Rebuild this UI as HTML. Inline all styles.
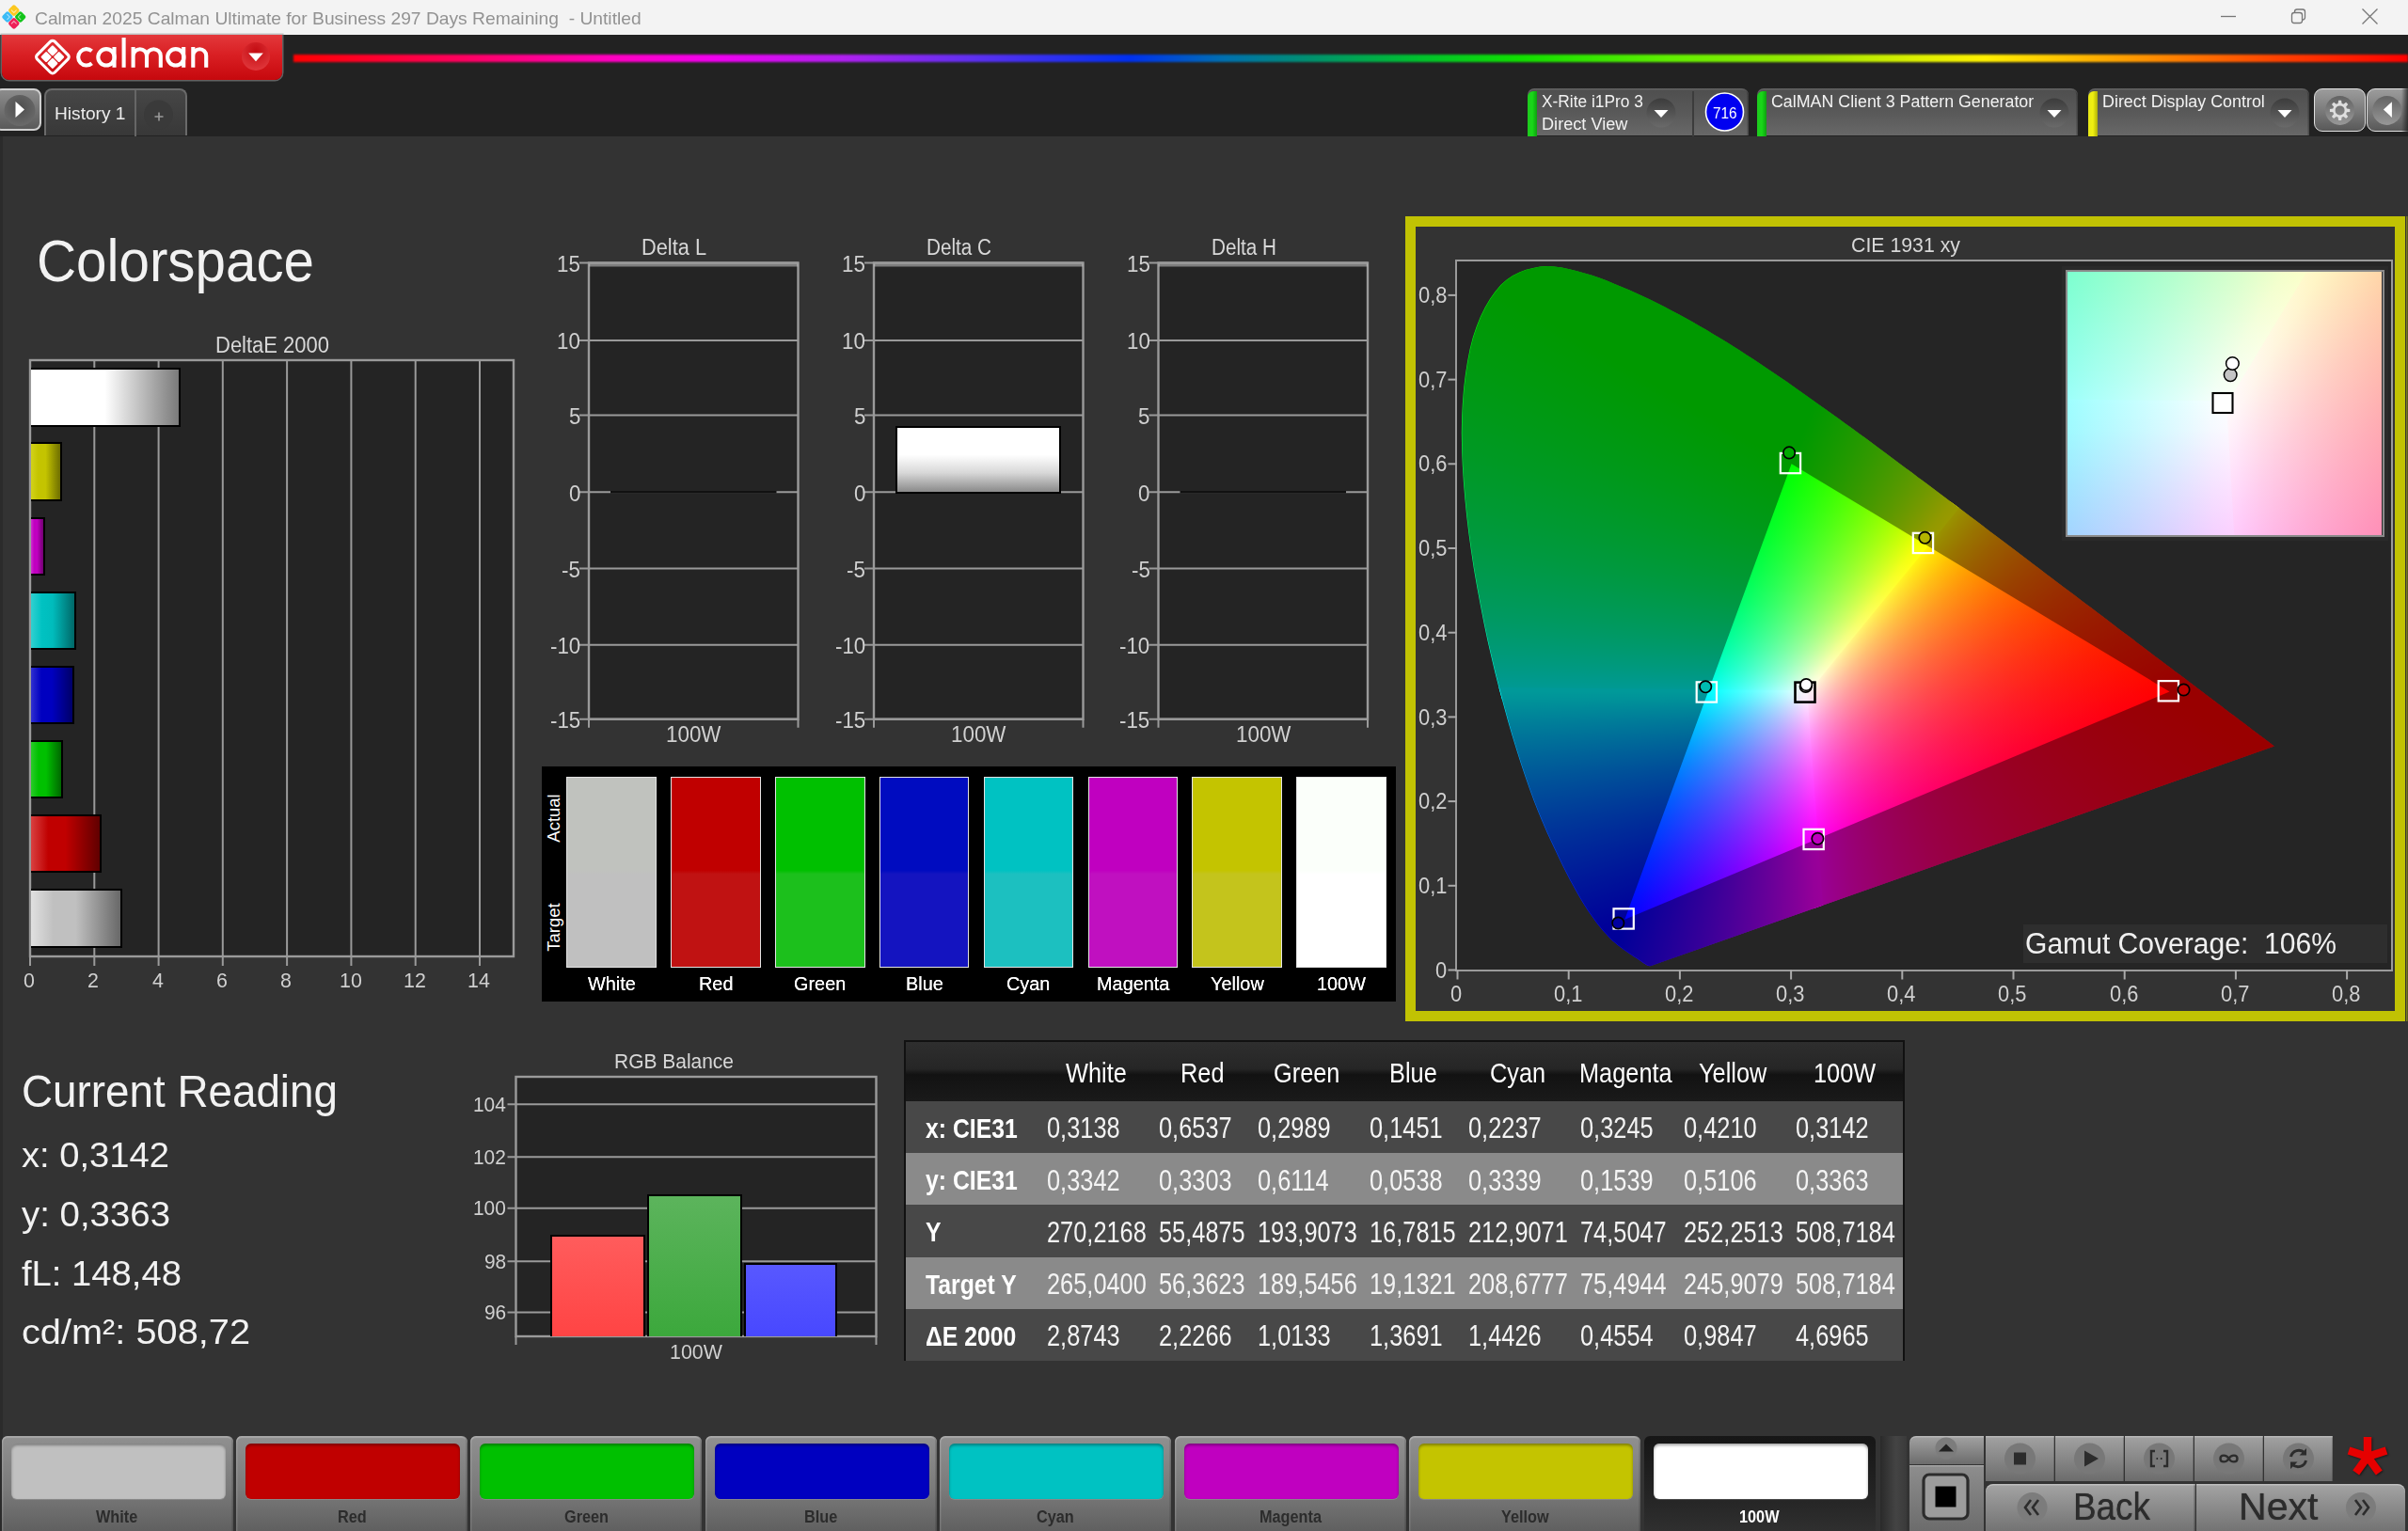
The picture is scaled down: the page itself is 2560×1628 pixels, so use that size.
<!DOCTYPE html>
<html><head><meta charset="utf-8"><title>Calman</title>
<style>
html,body{margin:0;padding:0;}
html{width:2560px;height:1628px;overflow:hidden;}
body{width:2560px;height:1628px;background:#333;overflow:hidden;position:relative;font-family:"Liberation Sans",sans-serif;}
#app{position:absolute;left:0;top:0;width:2560px;height:1628px;overflow:hidden;}
.t{position:absolute;white-space:nowrap;transform-origin:0 50%;}
.b{position:absolute;box-sizing:border-box;}
svg{position:absolute;overflow:visible;}
</style></head><body><div id="app">
<div class="b" style="left:0.0px;top:0.0px;width:2560.0px;height:37.0px;background:#f3f3f3"></div>
<div class="t" style="left:36.6px;top:10.7px;font-size:18.4px;line-height:18.4px;color:#929292;transform:scaleX(1.0459);white-space:pre;">Calman 2025 Calman Ultimate for Business 297 Days Remaining  - Untitled</div>
<svg style="left:0px;top:3px" width="30" height="30" viewBox="0 0 30 30">
<g transform="translate(14.8 15) rotate(45)">
<rect x="-9.5" y="-9.5" width="9.3" height="9.3" rx="2.2" fill="#fcc820"/>
<rect x="0.2" y="-9.5" width="9.3" height="9.3" rx="2.2" fill="#12c41a"/>
<rect x="-9.5" y="0.2" width="9.3" height="9.3" rx="2.2" fill="#3cbcf6"/>
<rect x="0.2" y="0.2" width="9.3" height="9.3" rx="2.2" fill="#ee2058"/>
<g fill="none" stroke="#fff" stroke-opacity=".6" stroke-width="1">
<path d="M-3.2 -7.200 v4 h-4"/><path d="M3.200 -7.200 v4 h4" transform="translate(0 0)"/><path d="M-7.200 3.200 h4 v4"/><path d="M3.200 7.200 v-4 h4"/></g>
</g></svg>
<svg style="left:2340px;top:0" width="220" height="37" viewBox="0 0 220 37" fill="none" stroke="#777" stroke-width="1.3">
<path d="M21 17.5 H37"/>
<rect x="96.5" y="13.5" width="11" height="11" rx="2.5"/><path d="M99.5 13 V12.5 a2.5 2.5 0 0 1 2.5 -2.5 h6 a2.5 2.5 0 0 1 2.5 2.5 v6 a2.5 2.5 0 0 1 -2.5 2.5 h-.5"/>
<path d="M171.5 9.5 L187.5 25.5 M187.5 9.5 L171.5 25.5"/>
</svg>
<div class="b" style="left:0.0px;top:37.0px;width:2560.0px;height:107.5px;background:#222"></div>
<div class="b" style="left:312.0px;top:57.5px;width:2248.0px;height:8.5px;background:linear-gradient(90deg,#ff0000 0%,#ff0060 8%,#ff00c0 15%,#f000f0 20%,#b020f0 26%,#6030f0 32%,#0030f0 39.5%,#0070b0 44%,#009070 48%,#00c030 53%,#10e000 58%,#60f000 65%,#a0e800 72%,#e0f000 77%,#fff000 80%,#ffc000 84%,#ff8000 89%,#ff4000 94%,#ff0000 100%);filter:blur(.8px);"></div>
<div class="b" style="left:2.0px;top:37.0px;width:298.0px;height:47.7px;background:linear-gradient(#e3383b,#d91f23 45%,#c6080d);border-radius:0 0 8px 8px;box-shadow:0 0 0 1.5px rgba(150,150,150,.55);"></div>
<div class="b" style="left:1493.5px;top:230.0px;width:1063.5px;height:856.0px;border:11px solid #c1c203;background:#333"></div>
<div class="b" style="left:1547.3px;top:275.8px;width:996.9px;height:756.9px;background:#252525;border:2.4px solid #9a9a9a"></div>
<div class="b" style="left:1548.5px;top:276.0px;width:994px;height:755px;clip-path:polygon(206.8px 751.0px,206.8px 751.0px,206.7px 751.0px,206.6px 751.1px,206.6px 751.1px,206.5px 751.1px,206.4px 751.1px,206.3px 751.1px,206.3px 751.1px,206.2px 751.2px,206.1px 751.2px,206.0px 751.2px,205.8px 751.2px,205.7px 751.2px,205.6px 751.2px,205.5px 751.2px,205.3px 751.2px,205.2px 751.2px,205.0px 751.2px,204.8px 751.2px,204.6px 751.1px,204.3px 751.1px,204.1px 751.1px,203.8px 751.0px,203.6px 750.9px,203.4px 750.8px,203.2px 750.8px,203.0px 750.7px,202.7px 750.5px,202.5px 750.4px,202.3px 750.3px,202.0px 750.2px,201.8px 750.0px,201.5px 749.9px,201.3px 749.7px,201.0px 749.5px,200.6px 749.3px,200.3px 749.1px,199.9px 748.9px,199.5px 748.6px,199.1px 748.4px,198.7px 748.1px,198.3px 747.8px,197.8px 747.5px,197.4px 747.2px,196.9px 746.8px,196.4px 746.5px,195.9px 746.1px,195.3px 745.7px,194.7px 745.3px,194.1px 744.9px,193.5px 744.5px,192.9px 744.1px,192.2px 743.6px,191.4px 743.1px,190.6px 742.6px,189.8px 742.1px,188.9px 741.5px,188.0px 740.9px,187.1px 740.3px,186.1px 739.6px,185.1px 739.0px,184.1px 738.3px,183.0px 737.6px,181.9px 736.8px,180.7px 736.0px,179.5px 735.1px,178.2px 734.2px,176.9px 733.3px,175.6px 732.3px,174.2px 731.2px,172.7px 730.1px,171.2px 728.9px,169.7px 727.6px,168.1px 726.3px,166.5px 724.9px,164.8px 723.4px,163.1px 721.7px,161.2px 719.7px,159.2px 717.5px,157.1px 715.2px,154.9px 712.7px,152.6px 710.0px,150.2px 707.0px,147.7px 703.7px,145.1px 700.1px,142.4px 696.3px,139.6px 692.2px,136.7px 687.8px,133.7px 683.0px,130.5px 677.6px,127.3px 671.9px,123.9px 665.8px,120.3px 659.2px,116.7px 652.2px,112.9px 644.7px,108.9px 636.5px,104.8px 627.7px,100.4px 618.5px,95.9px 608.7px,91.4px 598.3px,86.8px 587.2px,82.2px 575.5px,77.6px 563.0px,73.0px 549.8px,68.4px 536.0px,63.8px 521.5px,59.2px 506.5px,54.7px 490.9px,50.2px 474.6px,45.6px 457.5px,41.1px 439.9px,36.8px 421.8px,32.6px 403.6px,28.8px 385.3px,25.2px 366.8px,21.7px 347.9px,18.4px 328.9px,15.5px 309.8px,12.9px 290.9px,10.7px 272.6px,8.9px 254.5px,7.4px 236.4px,6.3px 218.7px,5.6px 201.2px,5.3px 184.4px,5.6px 168.1px,6.4px 152.4px,7.6px 137.1px,9.4px 122.3px,11.6px 108.2px,14.2px 94.9px,17.4px 82.6px,21.2px 71.2px,25.5px 60.5px,30.3px 50.7px,35.6px 41.8px,41.1px 33.9px,47.0px 27.1px,53.2px 21.5px,59.8px 17.0px,66.8px 13.5px,74.0px 10.8px,81.4px 8.9px,88.8px 7.6px,96.4px 7.1px,104.1px 7.5px,112.0px 8.6px,120.0px 10.3px,128.0px 12.3px,136.0px 14.4px,144.0px 16.7px,152.0px 19.5px,160.0px 22.6px,168.1px 25.9px,176.0px 29.2px,183.9px 32.6px,191.6px 36.0px,199.2px 39.5px,206.7px 43.1px,214.2px 46.8px,221.6px 50.6px,229.0px 54.4px,236.3px 58.3px,243.6px 62.3px,250.8px 66.3px,258.0px 70.5px,265.2px 74.6px,272.4px 78.9px,279.6px 83.2px,286.7px 87.6px,293.8px 92.1px,301.0px 96.6px,308.1px 101.2px,315.2px 105.8px,322.3px 110.5px,329.3px 115.2px,336.4px 120.0px,343.4px 124.8px,350.5px 129.6px,357.5px 134.5px,364.5px 139.4px,371.6px 144.4px,378.6px 149.4px,385.6px 154.4px,392.7px 159.4px,399.7px 164.5px,406.7px 169.6px,413.8px 174.7px,420.9px 179.8px,427.9px 185.0px,435.0px 190.1px,442.0px 195.3px,449.0px 200.5px,456.1px 205.7px,463.1px 210.9px,470.1px 216.2px,477.1px 221.4px,484.1px 226.6px,491.1px 231.9px,498.1px 237.1px,505.1px 242.3px,512.0px 247.5px,519.0px 252.7px,525.9px 257.9px,532.8px 263.1px,539.7px 268.3px,546.6px 273.5px,553.4px 278.6px,560.2px 283.8px,566.9px 288.9px,573.7px 294.0px,580.4px 299.0px,587.0px 304.1px,593.7px 309.1px,600.2px 314.1px,606.8px 319.0px,613.3px 323.9px,619.7px 328.8px,626.1px 333.7px,632.5px 338.5px,638.7px 343.2px,645.0px 347.9px,651.1px 352.5px,657.2px 357.1px,663.3px 361.7px,669.2px 366.2px,675.1px 370.6px,680.9px 375.0px,686.6px 379.3px,692.2px 383.6px,697.7px 387.8px,703.1px 391.9px,708.5px 395.9px,713.6px 399.8px,718.7px 403.6px,723.6px 407.4px,728.4px 411.0px,733.0px 414.5px,737.6px 418.0px,742.1px 421.4px,746.5px 424.7px,750.9px 428.0px,755.1px 431.2px,759.3px 434.3px,763.3px 437.4px,767.2px 440.3px,770.9px 443.1px,774.6px 445.8px,778.1px 448.5px,781.5px 451.0px,784.8px 453.5px,788.0px 455.9px,791.1px 458.2px,794.0px 460.5px,796.9px 462.7px,799.6px 464.7px,802.3px 466.8px,804.9px 468.7px,807.4px 470.6px,809.7px 472.4px,812.0px 474.1px,814.2px 475.8px,816.3px 477.4px,818.4px 479.0px,820.3px 480.4px,822.2px 481.9px,824.0px 483.2px,825.8px 484.5px,827.5px 485.8px,829.1px 487.0px,830.7px 488.2px,832.2px 489.4px,833.6px 490.5px,835.0px 491.5px,836.4px 492.6px,837.7px 493.6px,839.0px 494.6px,840.3px 495.5px,841.5px 496.4px,842.7px 497.3px,843.8px 498.2px,844.9px 499.0px,846.0px 499.9px,847.1px 500.7px,848.1px 501.4px,849.0px 502.1px,850.0px 502.9px,850.9px 503.5px,851.7px 504.2px,852.6px 504.8px,853.4px 505.4px,854.1px 506.0px,854.9px 506.5px,855.6px 507.0px,856.3px 507.5px,856.9px 508.0px,857.5px 508.5px,858.1px 508.9px,858.6px 509.3px,859.1px 509.7px,859.6px 510.1px,860.1px 510.5px,860.6px 510.8px,861.0px 511.2px,861.4px 511.5px,861.9px 511.8px,862.2px 512.1px,862.6px 512.3px,862.9px 512.6px,863.2px 512.8px,863.5px 513.0px,863.9px 513.3px,864.2px 513.6px,864.6px 513.9px,865.0px 514.2px,865.4px 514.4px,865.8px 514.8px,866.2px 515.1px,866.7px 515.5px,867.3px 516.0px,868.0px 516.4px,868.6px 516.9px,869.1px 517.3px,869.4px 517.5px)">
<div style="position:absolute;left:0;top:0;width:994px;height:755px;clip-path:polygon(367.8px 459.5px,2823.1px -2698.2px,3655.5px -1818.9px,4186.6px -730.7px,4367.7px 466.5px,4182.4px 1663.0px,3647.5px 2749.3px,2812.1px 3625.8px,1752.7px 4212.1px,566.4px 4454.6px);background:conic-gradient(from 0deg at 178.3px 701.7px,#00ff00 0deg,#00ff00 38deg,#00f600 39deg,#00e200 40deg,#00d100 41deg,#00c000 42deg,#00b200 43deg,#00a400 44deg,#009700 45deg,#008c00 46deg,#008100 47deg,#007700 48deg,#006d00 49deg,#006400 50deg,#005c00 51deg,#005400 52deg,#004c00 53deg,#004500 54deg,#003f00 55deg,#003800 56deg,#003200 57deg,#002c00 58deg,#002700 59deg,#002100 60deg,#001c00 61deg,#001700 62deg,#001300 63deg,#000e00 64deg,#000a00 65deg,#000500 66deg,#000100 67deg,#000000 68deg,#000000 247deg,#00ff00 248deg,#00ff00 360deg),conic-gradient(from 0deg at 355.6px 217.3px,#000000 0deg,#000000 121deg,#000002 122deg,#000004 123deg,#000007 124deg,#000009 125deg,#00000b 126deg,#00000d 127deg,#000010 128deg,#000012 129deg,#000015 130deg,#000017 131deg,#000019 132deg,#00001c 133deg,#00001e 134deg,#000021 135deg,#000024 136deg,#000026 137deg,#000029 138deg,#00002c 139deg,#00002f 140deg,#000031 141deg,#000034 142deg,#000037 143deg,#00003a 144deg,#00003d 145deg,#000041 146deg,#000044 147deg,#000047 148deg,#00004b 149deg,#00004e 150deg,#000052 151deg,#000056 152deg,#00005a 153deg,#00005e 154deg,#000062 155deg,#000066 156deg,#00006b 157deg,#00006f 158deg,#000074 159deg,#000079 160deg,#00007e 161deg,#000084 162deg,#00008a 163deg,#000090 164deg,#000096 165deg,#00009d 166deg,#0000a3 167deg,#0000ab 168deg,#0000b3 169deg,#0000bb 170deg,#0000c4 171deg,#0000cd 172deg,#0000d7 173deg,#0000e1 174deg,#0000ed 175deg,#0000f9 176deg,#0000ff 177deg,#0000ff 301deg,#000000 302deg,#000000 360deg),#f00;background-blend-mode:lighten,lighten,normal"></div>
<div style="position:absolute;left:0;top:0;width:994px;height:755px;clip-path:polygon(371.9px 463.1px,2902.3px -2634.8px,1933.9px -3219.3px,840.5px -3509.4px,-290.4px -3481.7px,-1368.3px -3138.5px,-2307.0px -2507.3px,-3031.5px -1638.5px,-3483.8px -601.7px,-3627.7px 520.4px);background:conic-gradient(from 0deg at 178.3px 701.7px,#000000 0deg,#000000 20deg,#080000 21deg,#120000 22deg,#1c0000 23deg,#260000 24deg,#310000 25deg,#3c0000 26deg,#480000 27deg,#540000 28deg,#610000 29deg,#6e0000 30deg,#7c0000 31deg,#8a0000 32deg,#990000 33deg,#a90000 34deg,#ba0000 35deg,#cc0000 36deg,#df0000 37deg,#f30000 38deg,#ff0000 39deg,#ff0000 200deg,#000000 201deg,#000000 360deg),conic-gradient(from 0deg at 757.5px 459.5px,#000000 0deg,#000000 121deg,#0000ff 122deg,#0000ff 269deg,#0000fc 270deg,#0000eb 271deg,#0000db 272deg,#0000cc 273deg,#0000bf 274deg,#0000b2 275deg,#0000a6 276deg,#00009b 277deg,#000091 278deg,#000087 279deg,#00007e 280deg,#000075 281deg,#00006c 282deg,#000064 283deg,#00005d 284deg,#000055 285deg,#00004f 286deg,#000048 287deg,#000042 288deg,#00003b 289deg,#000036 290deg,#000030 291deg,#00002a 292deg,#000025 293deg,#000020 294deg,#00001b 295deg,#000016 296deg,#000012 297deg,#00000d 298deg,#000009 299deg,#000005 300deg,#000000 301deg,#000000 360deg),#0f0;background-blend-mode:lighten,lighten,normal"></div>
<div style="position:absolute;left:0;top:0;width:994px;height:755px;clip-path:polygon(372.7px 458.2px,667.1px 4447.3px,-158.1px 4422.8px,-960.8px 4229.4px,-1706.6px 3875.3px,-2363.8px 3375.7px,-2904.5px 2751.7px,-3305.5px 2030.1px,-3549.9px 1241.5px,-3627.1px 419.5px);background:conic-gradient(from 0deg at 355.6px 217.3px,#000000 0deg,#000000 20deg,#ff0000 21deg,#ff0000 176deg,#f80000 177deg,#eb0000 178deg,#de0000 179deg,#d20000 180deg,#c60000 181deg,#ba0000 182deg,#ae0000 183deg,#a30000 184deg,#980000 185deg,#8d0000 186deg,#820000 187deg,#770000 188deg,#6d0000 189deg,#620000 190deg,#580000 191deg,#4e0000 192deg,#440000 193deg,#3a0000 194deg,#300000 195deg,#270000 196deg,#1d0000 197deg,#140000 198deg,#0a0000 199deg,#010000 200deg,#000000 201deg,#000000 360deg),conic-gradient(from 0deg at 757.5px 459.5px,#00ff00 0deg,#00ff00 67deg,#000000 68deg,#000000 247deg,#000600 248deg,#000e00 249deg,#001600 250deg,#001e00 251deg,#002600 252deg,#002f00 253deg,#003800 254deg,#004100 255deg,#004a00 256deg,#005400 257deg,#005e00 258deg,#006900 259deg,#007400 260deg,#007f00 261deg,#008b00 262deg,#009800 263deg,#00a500 264deg,#00b300 265deg,#00c100 266deg,#00d000 267deg,#00e000 268deg,#00f100 269deg,#00ff00 270deg,#00ff00 360deg),#00f;background-blend-mode:lighten,lighten,normal"></div>
<svg style="left:0;top:0" width="994" height="755"><path d="M206.8 751.0 L206.8 751.0 L206.7 751.0 L206.6 751.1 L206.6 751.1 L206.5 751.1 L206.4 751.1 L206.3 751.1 L206.3 751.1 L206.2 751.2 L206.1 751.2 L206.0 751.2 L205.8 751.2 L205.7 751.2 L205.6 751.2 L205.5 751.2 L205.3 751.2 L205.2 751.2 L205.0 751.2 L204.8 751.2 L204.6 751.1 L204.3 751.1 L204.1 751.1 L203.8 751.0 L203.6 750.9 L203.4 750.8 L203.2 750.8 L203.0 750.7 L202.7 750.5 L202.5 750.4 L202.3 750.3 L202.0 750.2 L201.8 750.0 L201.5 749.9 L201.3 749.7 L201.0 749.5 L200.6 749.3 L200.3 749.1 L199.9 748.9 L199.5 748.6 L199.1 748.4 L198.7 748.1 L198.3 747.8 L197.8 747.5 L197.4 747.2 L196.9 746.8 L196.4 746.5 L195.9 746.1 L195.3 745.7 L194.7 745.3 L194.1 744.9 L193.5 744.5 L192.9 744.1 L192.2 743.6 L191.4 743.1 L190.6 742.6 L189.8 742.1 L188.9 741.5 L188.0 740.9 L187.1 740.3 L186.1 739.6 L185.1 739.0 L184.1 738.3 L183.0 737.6 L181.9 736.8 L180.7 736.0 L179.5 735.1 L178.2 734.2 L176.9 733.3 L175.6 732.3 L174.2 731.2 L172.7 730.1 L171.2 728.9 L169.7 727.6 L168.1 726.3 L166.5 724.9 L164.8 723.4 L163.1 721.7 L161.2 719.7 L159.2 717.5 L157.1 715.2 L154.9 712.7 L152.6 710.0 L150.2 707.0 L147.7 703.7 L145.1 700.1 L142.4 696.3 L139.6 692.2 L136.7 687.8 L133.7 683.0 L130.5 677.6 L127.3 671.9 L123.9 665.8 L120.3 659.2 L116.7 652.2 L112.9 644.7 L108.9 636.5 L104.8 627.7 L100.4 618.5 L95.9 608.7 L91.4 598.3 L86.8 587.2 L82.2 575.5 L77.6 563.0 L73.0 549.8 L68.4 536.0 L63.8 521.5 L59.2 506.5 L54.7 490.9 L50.2 474.6 L45.6 457.5 L41.1 439.9 L36.8 421.8 L32.6 403.6 L28.8 385.3 L25.2 366.8 L21.7 347.9 L18.4 328.9 L15.5 309.8 L12.9 290.9 L10.7 272.6 L8.9 254.5 L7.4 236.4 L6.3 218.7 L5.6 201.2 L5.3 184.4 L5.6 168.1 L6.4 152.4 L7.6 137.1 L9.4 122.3 L11.6 108.2 L14.2 94.9 L17.4 82.6 L21.2 71.2 L25.5 60.5 L30.3 50.7 L35.6 41.8 L41.1 33.9 L47.0 27.1 L53.2 21.5 L59.8 17.0 L66.8 13.5 L74.0 10.8 L81.4 8.9 L88.8 7.6 L96.4 7.1 L104.1 7.5 L112.0 8.6 L120.0 10.3 L128.0 12.3 L136.0 14.4 L144.0 16.7 L152.0 19.5 L160.0 22.6 L168.1 25.9 L176.0 29.2 L183.9 32.6 L191.6 36.0 L199.2 39.5 L206.7 43.1 L214.2 46.8 L221.6 50.6 L229.0 54.4 L236.3 58.3 L243.6 62.3 L250.8 66.3 L258.0 70.5 L265.2 74.6 L272.4 78.9 L279.6 83.2 L286.7 87.6 L293.8 92.1 L301.0 96.6 L308.1 101.2 L315.2 105.8 L322.3 110.5 L329.3 115.2 L336.4 120.0 L343.4 124.8 L350.5 129.6 L357.5 134.5 L364.5 139.4 L371.6 144.4 L378.6 149.4 L385.6 154.4 L392.7 159.4 L399.7 164.5 L406.7 169.6 L413.8 174.7 L420.9 179.8 L427.9 185.0 L435.0 190.1 L442.0 195.3 L449.0 200.5 L456.1 205.7 L463.1 210.9 L470.1 216.2 L477.1 221.4 L484.1 226.6 L491.1 231.9 L498.1 237.1 L505.1 242.3 L512.0 247.5 L519.0 252.7 L525.9 257.9 L532.8 263.1 L539.7 268.3 L546.6 273.5 L553.4 278.6 L560.2 283.8 L566.9 288.9 L573.7 294.0 L580.4 299.0 L587.0 304.1 L593.7 309.1 L600.2 314.1 L606.8 319.0 L613.3 323.9 L619.7 328.8 L626.1 333.7 L632.5 338.5 L638.7 343.2 L645.0 347.9 L651.1 352.5 L657.2 357.1 L663.3 361.7 L669.2 366.2 L675.1 370.6 L680.9 375.0 L686.6 379.3 L692.2 383.6 L697.7 387.8 L703.1 391.9 L708.5 395.9 L713.6 399.8 L718.7 403.6 L723.6 407.4 L728.4 411.0 L733.0 414.5 L737.6 418.0 L742.1 421.4 L746.5 424.7 L750.9 428.0 L755.1 431.2 L759.3 434.3 L763.3 437.4 L767.2 440.3 L770.9 443.1 L774.6 445.8 L778.1 448.5 L781.5 451.0 L784.8 453.5 L788.0 455.9 L791.1 458.2 L794.0 460.5 L796.9 462.7 L799.6 464.7 L802.3 466.8 L804.9 468.7 L807.4 470.6 L809.7 472.4 L812.0 474.1 L814.2 475.8 L816.3 477.4 L818.4 479.0 L820.3 480.4 L822.2 481.9 L824.0 483.2 L825.8 484.5 L827.5 485.8 L829.1 487.0 L830.7 488.2 L832.2 489.4 L833.6 490.5 L835.0 491.5 L836.4 492.6 L837.7 493.6 L839.0 494.6 L840.3 495.5 L841.5 496.4 L842.7 497.3 L843.8 498.2 L844.9 499.0 L846.0 499.9 L847.1 500.7 L848.1 501.4 L849.0 502.1 L850.0 502.9 L850.9 503.5 L851.7 504.2 L852.6 504.8 L853.4 505.4 L854.1 506.0 L854.9 506.5 L855.6 507.0 L856.3 507.5 L856.9 508.0 L857.5 508.5 L858.1 508.9 L858.6 509.3 L859.1 509.7 L859.6 510.1 L860.1 510.5 L860.6 510.8 L861.0 511.2 L861.4 511.5 L861.9 511.8 L862.2 512.1 L862.6 512.3 L862.9 512.6 L863.2 512.8 L863.5 513.0 L863.9 513.3 L864.2 513.6 L864.6 513.9 L865.0 514.2 L865.4 514.4 L865.8 514.8 L866.2 515.1 L866.7 515.5 L867.3 516.0 L868.0 516.4 L868.6 516.9 L869.1 517.3 L869.4 517.5Z M757.5 459.5 L355.6 217.3 L178.3 701.7Z" fill="#000" fill-opacity=".4" fill-rule="evenodd"/></svg>
</div>
<div class="b" style="left:2557.6px;top:230.0px;width:2.4px;height:856.0px;background:linear-gradient(90deg,#8c8c10,#4a4a30)"></div>
<div class="t" style="left:1967.5px;top:249.5px;font-size:22.5px;line-height:22.5px;color:#d8d8d8;transform:scaleX(0.9464);">CIE 1931 xy</div>
<svg style="left:0;top:0" width="2560" height="1628"><path d="M1549.5 1031.5 v10" stroke="#aaa" stroke-width="2"/><path d="M1548.5 1031.5 h-9" stroke="#aaa" stroke-width="2"/><path d="M1667.7 1031.5 v10" stroke="#aaa" stroke-width="2"/><path d="M1548.5 941.8 h-9" stroke="#aaa" stroke-width="2"/><path d="M1785.9 1031.5 v10" stroke="#aaa" stroke-width="2"/><path d="M1548.5 852.1 h-9" stroke="#aaa" stroke-width="2"/><path d="M1904.1 1031.5 v10" stroke="#aaa" stroke-width="2"/><path d="M1548.5 762.4 h-9" stroke="#aaa" stroke-width="2"/><path d="M2022.3 1031.5 v10" stroke="#aaa" stroke-width="2"/><path d="M1548.5 672.7 h-9" stroke="#aaa" stroke-width="2"/><path d="M2140.5 1031.5 v10" stroke="#aaa" stroke-width="2"/><path d="M1548.5 583.0 h-9" stroke="#aaa" stroke-width="2"/><path d="M2258.7 1031.5 v10" stroke="#aaa" stroke-width="2"/><path d="M1548.5 493.3 h-9" stroke="#aaa" stroke-width="2"/><path d="M2376.9 1031.5 v10" stroke="#aaa" stroke-width="2"/><path d="M1548.5 403.6 h-9" stroke="#aaa" stroke-width="2"/><path d="M2495.1 1031.5 v10" stroke="#aaa" stroke-width="2"/><path d="M1548.5 313.9 h-9" stroke="#aaa" stroke-width="2"/></svg>
<div class="t" style="left:1542.4px;top:1046.1px;font-size:23.5px;line-height:23.5px;color:#d0d0d0;transform:scaleX(0.9300);">0</div>
<div class="t" style="left:1525.8px;top:1020.6px;font-size:23.5px;line-height:23.5px;color:#d0d0d0;transform:scaleX(0.9300);">0</div>
<div class="t" style="left:1651.5px;top:1046.1px;font-size:23.5px;line-height:23.5px;color:#d0d0d0;transform:scaleX(0.9300);">0,1</div>
<div class="t" style="left:1507.6px;top:930.9px;font-size:23.5px;line-height:23.5px;color:#d0d0d0;transform:scaleX(0.9300);">0,1</div>
<div class="t" style="left:1769.7px;top:1046.1px;font-size:23.5px;line-height:23.5px;color:#d0d0d0;transform:scaleX(0.9300);">0,2</div>
<div class="t" style="left:1507.6px;top:841.2px;font-size:23.5px;line-height:23.5px;color:#d0d0d0;transform:scaleX(0.9300);">0,2</div>
<div class="t" style="left:1887.9px;top:1046.1px;font-size:23.5px;line-height:23.5px;color:#d0d0d0;transform:scaleX(0.9300);">0,3</div>
<div class="t" style="left:1507.6px;top:751.5px;font-size:23.5px;line-height:23.5px;color:#d0d0d0;transform:scaleX(0.9300);">0,3</div>
<div class="t" style="left:2006.1px;top:1046.1px;font-size:23.5px;line-height:23.5px;color:#d0d0d0;transform:scaleX(0.9300);">0,4</div>
<div class="t" style="left:1507.6px;top:661.8px;font-size:23.5px;line-height:23.5px;color:#d0d0d0;transform:scaleX(0.9300);">0,4</div>
<div class="t" style="left:2124.3px;top:1046.1px;font-size:23.5px;line-height:23.5px;color:#d0d0d0;transform:scaleX(0.9300);">0,5</div>
<div class="t" style="left:1507.6px;top:572.1px;font-size:23.5px;line-height:23.5px;color:#d0d0d0;transform:scaleX(0.9300);">0,5</div>
<div class="t" style="left:2242.5px;top:1046.1px;font-size:23.5px;line-height:23.5px;color:#d0d0d0;transform:scaleX(0.9300);">0,6</div>
<div class="t" style="left:1507.6px;top:482.4px;font-size:23.5px;line-height:23.5px;color:#d0d0d0;transform:scaleX(0.9300);">0,6</div>
<div class="t" style="left:2360.7px;top:1046.1px;font-size:23.5px;line-height:23.5px;color:#d0d0d0;transform:scaleX(0.9300);">0,7</div>
<div class="t" style="left:1507.6px;top:392.7px;font-size:23.5px;line-height:23.5px;color:#d0d0d0;transform:scaleX(0.9300);">0,7</div>
<div class="t" style="left:2478.9px;top:1046.1px;font-size:23.5px;line-height:23.5px;color:#d0d0d0;transform:scaleX(0.9300);">0,8</div>
<div class="t" style="left:1507.6px;top:303.0px;font-size:23.5px;line-height:23.5px;color:#d0d0d0;transform:scaleX(0.9300);">0,8</div>
<div class="b" style="left:2192.0px;top:282.5px;width:346.5px;height:292.5px;background:#2e2e2e;border:4px solid #2a2a2a;box-shadow:inset 0 0 0 2px #8a8a8a;"></div>
<div class="b" style="left:2198.0px;top:288.5px;width:334px;height:280px;overflow:hidden;">
<div style="position:absolute;left:0;top:0;width:334px;height:280px;clip-path:polygon(164.1px 139.3px,2152.8px -3331.3px,3152.8px -2519.3px,3842.8px -1431.5px,4151.3px -180.8px,4046.2px 1103.1px,3538.5px 2287.1px,2680.9px 3248.3px,1562.2px 3887.0px,298.5px 4137.0px);background:conic-gradient(from 0deg at -744.1px 1686.8px,#00ff00 0deg,#00ff00 30deg,#00f500 31deg,#00e100 32deg,#00ce00 33deg,#00be00 34deg,#00af00 35deg,#00a200 36deg,#009500 37deg,#008a00 38deg,#007f00 39deg,#007500 40deg,#006c00 41deg,#006400 42deg,#005c00 43deg,#005400 44deg,#004d00 45deg,#004700 46deg,#004000 47deg,#003a00 48deg,#003400 49deg,#002f00 50deg,#002a00 51deg,#002500 52deg,#002000 53deg,#001b00 54deg,#001700 55deg,#001300 56deg,#000e00 57deg,#000a00 58deg,#000600 59deg,#000200 60deg,#000000 61deg,#000000 240deg,#00ff00 241deg,#00ff00 360deg),conic-gradient(from 0deg at 95.9px -1418.2px,#000000 0deg,#000000 129deg,#000002 130deg,#000005 131deg,#000007 132deg,#000009 133deg,#00000c 134deg,#00000e 135deg,#000011 136deg,#000013 137deg,#000016 138deg,#000018 139deg,#00001b 140deg,#00001d 141deg,#000020 142deg,#000023 143deg,#000026 144deg,#000029 145deg,#00002c 146deg,#00002f 147deg,#000032 148deg,#000035 149deg,#000039 150deg,#00003c 151deg,#000040 152deg,#000043 153deg,#000047 154deg,#00004b 155deg,#00004f 156deg,#000053 157deg,#000058 158deg,#00005d 159deg,#000062 160deg,#000067 161deg,#00006c 162deg,#000072 163deg,#000078 164deg,#00007e 165deg,#000085 166deg,#00008c 167deg,#000094 168deg,#00009c 169deg,#0000a4 170deg,#0000ae 171deg,#0000b8 172deg,#0000c2 173deg,#0000ce 174deg,#0000db 175deg,#0000e9 176deg,#0000f9 177deg,#0000ff 178deg,#0000ff 309deg,#000000 310deg,#000000 360deg),#f00;background-blend-mode:lighten,lighten,normal"></div>
<div style="position:absolute;left:0;top:0;width:334px;height:280px;clip-path:polygon(168.5px 142.6px,2239.9px -3279.3px,1266.4px -3703.8px,215.6px -3857.1px,-838.6px -3728.5px,-1821.8px -3327.1px,-2664.7px -2681.1px,-3307.9px -1836.0px,-3706.0px -851.5px,-3831.0px 203.1px);background:conic-gradient(from 0deg at -744.1px 1686.8px,#000000 0deg,#000000 15deg,#0b0000 16deg,#190000 17deg,#260000 18deg,#340000 19deg,#420000 20deg,#510000 21deg,#600000 22deg,#700000 23deg,#800000 24deg,#910000 25deg,#a30000 26deg,#b50000 27deg,#c90000 28deg,#dd0000 29deg,#f30000 30deg,#ff0000 31deg,#ff0000 195deg,#000000 196deg,#000000 360deg),conic-gradient(from 0deg at 1999.9px 134.2px,#000000 0deg,#000000 128deg,#0000ff 129deg,#0000ff 269deg,#0000f9 270deg,#0000ed 271deg,#0000e2 272deg,#0000d7 273deg,#0000cd 274deg,#0000c3 275deg,#0000ba 276deg,#0000b1 277deg,#0000a9 278deg,#0000a1 279deg,#000099 280deg,#000092 281deg,#00008b 282deg,#000084 283deg,#00007d 284deg,#000077 285deg,#000070 286deg,#00006a 287deg,#000065 288deg,#00005f 289deg,#000059 290deg,#000054 291deg,#00004f 292deg,#00004a 293deg,#000044 294deg,#000040 295deg,#00003b 296deg,#000036 297deg,#000031 298deg,#00002d 299deg,#000028 300deg,#000024 301deg,#000020 302deg,#00001b 303deg,#000017 304deg,#000013 305deg,#00000f 306deg,#00000a 307deg,#000006 308deg,#000002 309deg,#000000 310deg,#000000 360deg),#0f0;background-blend-mode:lighten,lighten,normal"></div>
<div style="position:absolute;left:0;top:0;width:334px;height:280px;clip-path:polygon(169.1px 137.8px,399.4px 4131.2px,-417.0px 4094.7px,-1208.9px 3893.0px,-1943.3px 3534.5px,-2589.6px 3034.3px,-3120.7px 2413.2px,-3514.5px 1697.2px,-3754.5px 916.0px,-3830.8px 102.4px);background:conic-gradient(from 0deg at 95.9px -1418.2px,#000000 0deg,#000000 15deg,#ff0000 16deg,#ff0000 177deg,#f40000 178deg,#e40000 179deg,#d40000 180deg,#c40000 181deg,#b50000 182deg,#a60000 183deg,#970000 184deg,#890000 185deg,#7b0000 186deg,#6d0000 187deg,#5f0000 188deg,#520000 189deg,#440000 190deg,#370000 191deg,#2a0000 192deg,#1d0000 193deg,#100000 194deg,#020000 195deg,#000000 196deg,#000000 360deg),conic-gradient(from 0deg at 1999.9px 134.2px,#00ff00 0deg,#00ff00 61deg,#000000 62deg,#000000 239deg,#000100 240deg,#000800 241deg,#000f00 242deg,#001600 243deg,#001d00 244deg,#002400 245deg,#002b00 246deg,#003200 247deg,#003900 248deg,#004000 249deg,#004800 250deg,#004f00 251deg,#005700 252deg,#005f00 253deg,#006600 254deg,#006f00 255deg,#007700 256deg,#007f00 257deg,#008800 258deg,#009100 259deg,#009a00 260deg,#00a300 261deg,#00ad00 262deg,#00b600 263deg,#00c100 264deg,#00cb00 265deg,#00d600 266deg,#00e100 267deg,#00ed00 268deg,#00f900 269deg,#00ff00 270deg,#00ff00 360deg),#00f;background-blend-mode:lighten,lighten,normal"></div>
</div>
<svg style="left:0;top:0" width="2560" height="1628"><rect x="2294.7" y="724.1" width="21.3" height="21.3" fill="none" stroke="#fff" stroke-width="2.2"/><rect x="1892.8" y="481.9" width="21.3" height="21.3" fill="none" stroke="#fff" stroke-width="2.2"/><rect x="1715.5" y="966.3" width="21.3" height="21.3" fill="none" stroke="#fff" stroke-width="2.2"/><rect x="1803.7" y="725.3" width="21.3" height="21.3" fill="none" stroke="#fff" stroke-width="2.2"/><rect x="1917.5" y="881.8" width="21.3" height="21.3" fill="none" stroke="#fff" stroke-width="2.2"/><rect x="2033.8" y="566.8" width="21.3" height="21.3" fill="none" stroke="#fff" stroke-width="2.2"/><rect x="1908.5" y="725.6" width="21" height="21" fill="#f4e4f4" fill-opacity=".45" stroke="#000" stroke-width="2.6"/><circle cx="2321.5" cy="733.5" r="6.2" fill="#c00000" stroke="#000" stroke-width="1.7"/><circle cx="1902.1" cy="481.4" r="6.2" fill="#00a800" stroke="#000" stroke-width="1.7"/><circle cx="1720.3" cy="981.5" r="6.2" fill="#0000a0" stroke="#000" stroke-width="1.7"/><circle cx="1813.2" cy="730.3" r="6.2" fill="#00bcb0" stroke="#000" stroke-width="1.7"/><circle cx="1932.4" cy="891.8" r="6.2" fill="#c000c0" stroke="#000" stroke-width="1.7"/><circle cx="2046.4" cy="571.8" r="6.2" fill="#b4b400" stroke="#000" stroke-width="1.7"/><circle cx="1919.7" cy="730.0" r="6.2" fill="#c8c8c8" stroke="#000" stroke-width="1.7"/><circle cx="1920.2" cy="728.1" r="6.2" fill="#ffffff" stroke="#000" stroke-width="1.7"/><rect x="2352.5" y="418.0" width="21" height="21" fill="#fff" stroke="#000" stroke-width="2.1"/><circle cx="2371.2" cy="398.6" r="6.8" fill="#c4c4c4" stroke="#000" stroke-width="1.5"/><circle cx="2373.4" cy="386.5" r="6.8" fill="#fff" stroke="#000" stroke-width="1.5"/></svg>
<div class="b" style="left:2151.0px;top:983.0px;width:387.0px;height:41.0px;background:#2e2e2e"></div>
<div class="t" style="left:2152.5px;top:988.3px;font-size:31.0px;line-height:31.0px;color:#f0f0f0;transform:scaleX(0.9701);white-space:pre;">Gamut Coverage:  106%</div>
<div class="b" style="left:0.0px;top:145.0px;width:2.5px;height:1483.0px;background:#2b2b2b"></div>
<div class="t" style="left:38.5px;top:246.2px;font-size:63.0px;line-height:63.0px;color:#f2f2f2;transform:scaleX(0.9257);">Colorspace</div>
<div class="t" style="left:228.5px;top:356.0px;font-size:23.0px;line-height:23.0px;color:#d8d8d8;transform:scaleX(0.9558);">DeltaE 2000</div>
<svg style="left:0;top:0" width="2560" height="1628"><rect x="32.0" y="383.0" width="514.0" height="634.0" fill="#242424"/><path d="M100.3 383.0 V1017.0" stroke="#9a9a9a" stroke-width="2"/><path d="M168.6 383.0 V1017.0" stroke="#9a9a9a" stroke-width="2"/><path d="M236.8 383.0 V1017.0" stroke="#9a9a9a" stroke-width="2"/><path d="M305.1 383.0 V1017.0" stroke="#9a9a9a" stroke-width="2"/><path d="M373.4 383.0 V1017.0" stroke="#9a9a9a" stroke-width="2"/><path d="M441.7 383.0 V1017.0" stroke="#9a9a9a" stroke-width="2"/><path d="M510.0 383.0 V1017.0" stroke="#9a9a9a" stroke-width="2"/><rect x="32.0" y="383.0" width="514.0" height="634.0" fill="none" stroke="#9a9a9a" stroke-width="2.4"/><path d="M32.0 1017.0 v10" stroke="#9a9a9a" stroke-width="2"/><path d="M100.3 1017.0 v10" stroke="#9a9a9a" stroke-width="2"/><path d="M168.6 1017.0 v10" stroke="#9a9a9a" stroke-width="2"/><path d="M236.8 1017.0 v10" stroke="#9a9a9a" stroke-width="2"/><path d="M305.1 1017.0 v10" stroke="#9a9a9a" stroke-width="2"/><path d="M373.4 1017.0 v10" stroke="#9a9a9a" stroke-width="2"/><path d="M441.7 1017.0 v10" stroke="#9a9a9a" stroke-width="2"/><path d="M510.0 1017.0 v10" stroke="#9a9a9a" stroke-width="2"/></svg>
<div class="b" style="left:33.2px;top:391.3px;width:159.3px;height:62.5px;background:linear-gradient(90deg,#fff 0,#fff 25%,#fff 50%,#7a7a7a 100%);border:2.5px solid #000;border-left:0;"></div>
<div class="b" style="left:33.2px;top:470.4px;width:32.6px;height:62.5px;background:linear-gradient(90deg,#d2d218 0,#c4c400 25%,#c4c400 50%,#6e6e00 100%);border:2.5px solid #000;border-left:0;"></div>
<div class="b" style="left:33.2px;top:549.5px;width:14.5px;height:62.5px;background:linear-gradient(90deg,#d030d0 0,#c000c0 25%,#c000c0 50%,#700070 100%);border:2.5px solid #000;border-left:0;"></div>
<div class="b" style="left:33.2px;top:628.6px;width:48.3px;height:62.5px;background:linear-gradient(90deg,#30d0d0 0,#00c2c2 25%,#00bcbc 50%,#006868 100%);border:2.5px solid #000;border-left:0;"></div>
<div class="b" style="left:33.2px;top:707.7px;width:45.7px;height:62.5px;background:linear-gradient(90deg,#3030d0 0,#0000c0 25%,#0000c0 50%,#000068 100%);border:2.5px solid #000;border-left:0;"></div>
<div class="b" style="left:33.2px;top:786.8px;width:33.6px;height:62.5px;background:linear-gradient(90deg,#28cc28 0,#00c000 25%,#00c000 50%,#006800 100%);border:2.5px solid #000;border-left:0;"></div>
<div class="b" style="left:33.2px;top:865.9px;width:75.0px;height:62.5px;background:linear-gradient(90deg,#d84040 0,#c00000 25%,#c00000 50%,#600000 100%);border:2.5px solid #000;border-left:0;"></div>
<div class="b" style="left:33.2px;top:945.0px;width:97.1px;height:62.5px;background:linear-gradient(90deg,#e0e0e0 0,#c0c0c0 25%,#c0c0c0 50%,#686868 100%);border:2.5px solid #000;border-left:0;"></div>
<div class="t" style="left:25.1px;top:1031.5px;font-size:22.5px;line-height:22.5px;color:#d0d0d0;transform:scaleX(0.9500);">0</div>
<div class="t" style="left:93.3px;top:1031.5px;font-size:22.5px;line-height:22.5px;color:#d0d0d0;transform:scaleX(0.9500);">2</div>
<div class="t" style="left:161.6px;top:1031.5px;font-size:22.5px;line-height:22.5px;color:#d0d0d0;transform:scaleX(0.9500);">4</div>
<div class="t" style="left:229.9px;top:1031.5px;font-size:22.5px;line-height:22.5px;color:#d0d0d0;transform:scaleX(0.9500);">6</div>
<div class="t" style="left:298.2px;top:1031.5px;font-size:22.5px;line-height:22.5px;color:#d0d0d0;transform:scaleX(0.9500);">8</div>
<div class="t" style="left:360.5px;top:1031.5px;font-size:22.5px;line-height:22.5px;color:#d0d0d0;transform:scaleX(0.9500);">10</div>
<div class="t" style="left:428.8px;top:1031.5px;font-size:22.5px;line-height:22.5px;color:#d0d0d0;transform:scaleX(0.9500);">12</div>
<div class="t" style="left:497.1px;top:1031.5px;font-size:22.5px;line-height:22.5px;color:#d0d0d0;transform:scaleX(0.9500);">14</div>
<svg style="left:0;top:0" width="2560" height="1628"><rect x="626.0" y="279.5" width="222.5" height="485.2" fill="#242424"/><path d="M616.0 279.5 H848.5" stroke="#9a9a9a" stroke-width="2"/><path d="M616.0 362.0 H848.5" stroke="#9a9a9a" stroke-width="2"/><path d="M616.0 441.5 H848.5" stroke="#9a9a9a" stroke-width="2"/><path d="M616.0 523.3 H848.5" stroke="#9a9a9a" stroke-width="2"/><path d="M616.0 604.5 H848.5" stroke="#9a9a9a" stroke-width="2"/><path d="M616.0 685.8 H848.5" stroke="#9a9a9a" stroke-width="2"/><path d="M616.0 764.7 H848.5" stroke="#9a9a9a" stroke-width="2"/><rect x="626.0" y="279.5" width="222.5" height="485.2" fill="none" stroke="#9a9a9a" stroke-width="2.4"/><path d="M626.0 282.0 H848.5" stroke="#bbb" stroke-width="3" stroke-opacity=".6"/><path d="M626.0 764.7 v9 M848.5 764.7 v9" stroke="#9a9a9a" stroke-width="2"/><path d="M649.0 523.3 H825.5" stroke="#111" stroke-width="2.4"/></svg>
<div class="t" style="left:592.2px;top:269.9px;font-size:23.5px;line-height:23.5px;color:#d0d0d0;transform:scaleX(0.9500);">15</div>
<div class="t" style="left:592.2px;top:352.4px;font-size:23.5px;line-height:23.5px;color:#d0d0d0;transform:scaleX(0.9500);">10</div>
<div class="t" style="left:604.6px;top:431.9px;font-size:23.5px;line-height:23.5px;color:#d0d0d0;transform:scaleX(0.9500);">5</div>
<div class="t" style="left:604.6px;top:513.7px;font-size:23.5px;line-height:23.5px;color:#d0d0d0;transform:scaleX(0.9500);">0</div>
<div class="t" style="left:597.1px;top:594.9px;font-size:23.5px;line-height:23.5px;color:#d0d0d0;transform:scaleX(0.9500);">-5</div>
<div class="t" style="left:584.7px;top:676.2px;font-size:23.5px;line-height:23.5px;color:#d0d0d0;transform:scaleX(0.9500);">-10</div>
<div class="t" style="left:584.7px;top:755.1px;font-size:23.5px;line-height:23.5px;color:#d0d0d0;transform:scaleX(0.9500);">-15</div>
<div class="t" style="left:682.2px;top:251.5px;font-size:23.0px;line-height:23.0px;color:#d8d8d8;transform:scaleX(0.9468);">Delta L</div>
<div class="t" style="left:708.0px;top:769.5px;font-size:23.0px;line-height:23.0px;color:#d0d0d0;transform:scaleX(0.9736);">100W</div>
<svg style="left:0;top:0" width="2560" height="1628"><rect x="929.0" y="279.5" width="222.5" height="485.2" fill="#242424"/><path d="M919.0 279.5 H1151.5" stroke="#9a9a9a" stroke-width="2"/><path d="M919.0 362.0 H1151.5" stroke="#9a9a9a" stroke-width="2"/><path d="M919.0 441.5 H1151.5" stroke="#9a9a9a" stroke-width="2"/><path d="M919.0 523.3 H1151.5" stroke="#9a9a9a" stroke-width="2"/><path d="M919.0 604.5 H1151.5" stroke="#9a9a9a" stroke-width="2"/><path d="M919.0 685.8 H1151.5" stroke="#9a9a9a" stroke-width="2"/><path d="M919.0 764.7 H1151.5" stroke="#9a9a9a" stroke-width="2"/><rect x="929.0" y="279.5" width="222.5" height="485.2" fill="none" stroke="#9a9a9a" stroke-width="2.4"/><path d="M929.0 282.0 H1151.5" stroke="#bbb" stroke-width="3" stroke-opacity=".6"/><path d="M929.0 764.7 v9 M1151.5 764.7 v9" stroke="#9a9a9a" stroke-width="2"/></svg>
<div class="b" style="left:951.5px;top:453.4px;width:176.5px;height:71.4px;background:linear-gradient(#fff 0,#fff 42%,#d8d8d8 70%,#8a8a8a 100%);border:2.5px solid #000;"></div>
<div class="t" style="left:895.2px;top:269.9px;font-size:23.5px;line-height:23.5px;color:#d0d0d0;transform:scaleX(0.9500);">15</div>
<div class="t" style="left:895.2px;top:352.4px;font-size:23.5px;line-height:23.5px;color:#d0d0d0;transform:scaleX(0.9500);">10</div>
<div class="t" style="left:907.6px;top:431.9px;font-size:23.5px;line-height:23.5px;color:#d0d0d0;transform:scaleX(0.9500);">5</div>
<div class="t" style="left:907.6px;top:513.7px;font-size:23.5px;line-height:23.5px;color:#d0d0d0;transform:scaleX(0.9500);">0</div>
<div class="t" style="left:900.1px;top:594.9px;font-size:23.5px;line-height:23.5px;color:#d0d0d0;transform:scaleX(0.9500);">-5</div>
<div class="t" style="left:887.7px;top:676.2px;font-size:23.5px;line-height:23.5px;color:#d0d0d0;transform:scaleX(0.9500);">-10</div>
<div class="t" style="left:887.7px;top:755.1px;font-size:23.5px;line-height:23.5px;color:#d0d0d0;transform:scaleX(0.9500);">-15</div>
<div class="t" style="left:985.2px;top:251.5px;font-size:23.0px;line-height:23.0px;color:#d8d8d8;transform:scaleX(0.8997);">Delta C</div>
<div class="t" style="left:1011.0px;top:769.5px;font-size:23.0px;line-height:23.0px;color:#d0d0d0;transform:scaleX(0.9736);">100W</div>
<svg style="left:0;top:0" width="2560" height="1628"><rect x="1231.5" y="279.5" width="222.5" height="485.2" fill="#242424"/><path d="M1221.5 279.5 H1454.0" stroke="#9a9a9a" stroke-width="2"/><path d="M1221.5 362.0 H1454.0" stroke="#9a9a9a" stroke-width="2"/><path d="M1221.5 441.5 H1454.0" stroke="#9a9a9a" stroke-width="2"/><path d="M1221.5 523.3 H1454.0" stroke="#9a9a9a" stroke-width="2"/><path d="M1221.5 604.5 H1454.0" stroke="#9a9a9a" stroke-width="2"/><path d="M1221.5 685.8 H1454.0" stroke="#9a9a9a" stroke-width="2"/><path d="M1221.5 764.7 H1454.0" stroke="#9a9a9a" stroke-width="2"/><rect x="1231.5" y="279.5" width="222.5" height="485.2" fill="none" stroke="#9a9a9a" stroke-width="2.4"/><path d="M1231.5 282.0 H1454.0" stroke="#bbb" stroke-width="3" stroke-opacity=".6"/><path d="M1231.5 764.7 v9 M1454.0 764.7 v9" stroke="#9a9a9a" stroke-width="2"/><path d="M1254.5 523.3 H1431.0" stroke="#111" stroke-width="2.4"/></svg>
<div class="t" style="left:1197.7px;top:269.9px;font-size:23.5px;line-height:23.5px;color:#d0d0d0;transform:scaleX(0.9500);">15</div>
<div class="t" style="left:1197.7px;top:352.4px;font-size:23.5px;line-height:23.5px;color:#d0d0d0;transform:scaleX(0.9500);">10</div>
<div class="t" style="left:1210.1px;top:431.9px;font-size:23.5px;line-height:23.5px;color:#d0d0d0;transform:scaleX(0.9500);">5</div>
<div class="t" style="left:1210.1px;top:513.7px;font-size:23.5px;line-height:23.5px;color:#d0d0d0;transform:scaleX(0.9500);">0</div>
<div class="t" style="left:1202.6px;top:594.9px;font-size:23.5px;line-height:23.5px;color:#d0d0d0;transform:scaleX(0.9500);">-5</div>
<div class="t" style="left:1190.2px;top:676.2px;font-size:23.5px;line-height:23.5px;color:#d0d0d0;transform:scaleX(0.9500);">-10</div>
<div class="t" style="left:1190.2px;top:755.1px;font-size:23.5px;line-height:23.5px;color:#d0d0d0;transform:scaleX(0.9500);">-15</div>
<div class="t" style="left:1287.8px;top:251.5px;font-size:23.0px;line-height:23.0px;color:#d8d8d8;transform:scaleX(0.8997);">Delta H</div>
<div class="t" style="left:1313.5px;top:769.5px;font-size:23.0px;line-height:23.0px;color:#d0d0d0;transform:scaleX(0.9736);">100W</div>
<div class="b" style="left:576.0px;top:815.0px;width:907.5px;height:250.0px;background:#000"></div>
<div class="b" style="left:602.3px;top:825.5px;width:95.6px;height:203.5px;background:linear-gradient(#c0c2be 0,#c0c2be 49%,#c0c0c0 51%,#c0c0c0 100%);border:1.7px solid #e4e4e4;"></div>
<div class="t" style="left:624.7px;top:1036.5px;font-size:19.5px;line-height:19.5px;color:#fff;transform:scaleX(1.0200);text-shadow:0 0 .6px #fff;">White</div>
<div class="b" style="left:713.1px;top:825.5px;width:95.6px;height:203.5px;background:linear-gradient(#c00000 0,#c00000 49%,#c01212 51%,#c01212 100%);border:1.7px solid #e4e4e4;"></div>
<div class="t" style="left:742.7px;top:1036.5px;font-size:19.5px;line-height:19.5px;color:#fff;transform:scaleX(1.0200);text-shadow:0 0 .6px #fff;">Red</div>
<div class="b" style="left:824.0px;top:825.5px;width:95.6px;height:203.5px;background:linear-gradient(#00c000 0,#00c000 49%,#1cc01c 51%,#1cc01c 100%);border:1.7px solid #e4e4e4;"></div>
<div class="t" style="left:844.2px;top:1036.5px;font-size:19.5px;line-height:19.5px;color:#fff;transform:scaleX(1.0200);text-shadow:0 0 .6px #fff;">Green</div>
<div class="b" style="left:934.8px;top:825.5px;width:95.6px;height:203.5px;background:linear-gradient(#000cc0 0,#000cc0 49%,#1414c0 51%,#1414c0 100%);border:1.7px solid #e4e4e4;"></div>
<div class="t" style="left:962.7px;top:1036.5px;font-size:19.5px;line-height:19.5px;color:#fff;transform:scaleX(1.0200);text-shadow:0 0 .6px #fff;">Blue</div>
<div class="b" style="left:1045.7px;top:825.5px;width:95.6px;height:203.5px;background:linear-gradient(#00c2c2 0,#00c2c2 49%,#1cc0c0 51%,#1cc0c0 100%);border:1.7px solid #e4e4e4;"></div>
<div class="t" style="left:1070.3px;top:1036.5px;font-size:19.5px;line-height:19.5px;color:#fff;transform:scaleX(1.0200);text-shadow:0 0 .6px #fff;">Cyan</div>
<div class="b" style="left:1156.5px;top:825.5px;width:95.6px;height:203.5px;background:linear-gradient(#c000c0 0,#c000c0 49%,#c010c0 51%,#c010c0 100%);border:1.7px solid #e4e4e4;"></div>
<div class="t" style="left:1165.6px;top:1036.5px;font-size:19.5px;line-height:19.5px;color:#fff;transform:scaleX(1.0200);text-shadow:0 0 .6px #fff;">Magenta</div>
<div class="b" style="left:1267.4px;top:825.5px;width:95.6px;height:203.5px;background:linear-gradient(#c4c400 0,#c4c400 49%,#c4c41c 51%,#c4c41c 100%);border:1.7px solid #e4e4e4;"></div>
<div class="t" style="left:1286.8px;top:1036.5px;font-size:19.5px;line-height:19.5px;color:#fff;transform:scaleX(1.0200);text-shadow:0 0 .6px #fff;">Yellow</div>
<div class="b" style="left:1378.2px;top:825.5px;width:95.6px;height:203.5px;background:linear-gradient(#fbfffa 0,#fbfffa 49%,#ffffff 51%,#ffffff 100%);border:1.7px solid #e4e4e4;"></div>
<div class="t" style="left:1400.1px;top:1036.5px;font-size:19.5px;line-height:19.5px;color:#fff;transform:scaleX(1.0200);text-shadow:0 0 .6px #fff;">100W</div>
<div class="t" style="left:579.3px;top:858px;width:0;height:0;color:#fff;font-size:18.5px;"><div style="position:absolute;transform:rotate(-90deg) translate(-50%,0);transform-origin:0 0;white-space:nowrap;left:0;top:12px;line-height:20px;">Actual</div></div>
<div class="t" style="left:579.3px;top:974px;width:0;height:0;color:#fff;font-size:18.5px;"><div style="position:absolute;transform:rotate(-90deg) translate(-50%,0);transform-origin:0 0;white-space:nowrap;left:0;top:12px;line-height:20px;">Target</div></div>
<div class="t" style="left:23.0px;top:1137.3px;font-size:47.5px;line-height:47.5px;color:#f2f2f2;transform:scaleX(0.9640);">Current Reading</div>
<div class="t" style="left:23.0px;top:1211.1px;font-size:36.5px;line-height:36.5px;color:#f2f2f2;transform:scaleX(1.0455);">x: 0,3142</div>
<div class="t" style="left:23.0px;top:1273.8px;font-size:36.5px;line-height:36.5px;color:#f2f2f2;transform:scaleX(1.0521);">y: 0,3363</div>
<div class="t" style="left:23.0px;top:1336.5px;font-size:36.5px;line-height:36.5px;color:#f2f2f2;transform:scaleX(1.0470);">fL: 148,48</div>
<div class="t" style="left:23.0px;top:1399.2px;font-size:36.5px;line-height:36.5px;color:#f2f2f2;transform:scaleX(1.0888);">cd/m²: 508,72</div>
<div class="t" style="left:653.0px;top:1118.8px;font-size:21.5px;line-height:21.5px;color:#d8d8d8;transform:scaleX(0.9749);">RGB Balance</div>
<svg style="left:0;top:0" width="2560" height="1628"><rect x="548.5" y="1145.0" width="383.0" height="276.0" fill="#242424"/><path d="M539.5 1174.2 H931.5" stroke="#9a9a9a" stroke-width="2"/><path d="M539.5 1230.3 H931.5" stroke="#9a9a9a" stroke-width="2"/><path d="M539.5 1284.7 H931.5" stroke="#9a9a9a" stroke-width="2"/><path d="M539.5 1341.2 H931.5" stroke="#9a9a9a" stroke-width="2"/><path d="M539.5 1395.5 H931.5" stroke="#9a9a9a" stroke-width="2"/><rect x="548.5" y="1145.0" width="383.0" height="276.0" fill="none" stroke="#9a9a9a" stroke-width="2.4"/><path d="M548.5 1421.0 v9 M931.5 1421.0 v9" stroke="#9a9a9a" stroke-width="2"/></svg>
<div class="t" style="left:503.1px;top:1163.6px;font-size:22.0px;line-height:22.0px;color:#d0d0d0;transform:scaleX(0.9500);">104</div>
<div class="t" style="left:503.1px;top:1219.7px;font-size:22.0px;line-height:22.0px;color:#d0d0d0;transform:scaleX(0.9500);">102</div>
<div class="t" style="left:503.1px;top:1274.1px;font-size:22.0px;line-height:22.0px;color:#d0d0d0;transform:scaleX(0.9500);">100</div>
<div class="t" style="left:514.8px;top:1330.6px;font-size:22.0px;line-height:22.0px;color:#d0d0d0;transform:scaleX(0.9500);">98</div>
<div class="t" style="left:514.8px;top:1384.9px;font-size:22.0px;line-height:22.0px;color:#d0d0d0;transform:scaleX(0.9500);">96</div>
<div class="t" style="left:712.1px;top:1427.0px;font-size:22.5px;line-height:22.5px;color:#d0d0d0;transform:scaleX(0.9500);">100W</div>
<div class="b" style="left:584.5px;top:1313.0px;width:101.5px;height:108.0px;background:linear-gradient(#ff5c5c,#ff4444);border:2.5px solid #000;border-bottom:0"></div>
<div class="b" style="left:688.0px;top:1269.5px;width:101.0px;height:151.5px;background:linear-gradient(#5cb45c,#3ca83c);border:2.5px solid #000;border-bottom:0"></div>
<div class="b" style="left:790.5px;top:1342.5px;width:99.5px;height:78.5px;background:linear-gradient(#5858ff,#4848ff);border:2.5px solid #000;border-bottom:0"></div>
<div class="b" style="left:961.0px;top:1105.5px;width:1064.0px;height:341.5px;background:#111"></div>
<div class="b" style="left:963.0px;top:1107.5px;width:1060.0px;height:63.0px;background:linear-gradient(#2e2e2e 0,#262626 45%,#121212 55%,#1a1a1a 100%)"></div>
<div class="b" style="left:963.0px;top:1170.5px;width:1060.0px;height:55.5px;background:#484848"></div>
<div class="b" style="left:963.0px;top:1226.0px;width:1060.0px;height:55.0px;background:#8a8a8a"></div>
<div class="b" style="left:963.0px;top:1281.0px;width:1060.0px;height:55.5px;background:#484848"></div>
<div class="b" style="left:963.0px;top:1336.5px;width:1060.0px;height:55.0px;background:#8a8a8a"></div>
<div class="b" style="left:963.0px;top:1391.5px;width:1060.0px;height:55.5px;background:#484848"></div>
<div class="t" style="left:1133.1px;top:1125.6px;font-size:30.0px;line-height:30.0px;color:#fff;transform:scaleX(0.8450);">White</div>
<div class="t" style="left:1254.7px;top:1125.6px;font-size:30.0px;line-height:30.0px;color:#fff;transform:scaleX(0.8450);">Red</div>
<div class="t" style="left:1353.8px;top:1125.6px;font-size:30.0px;line-height:30.0px;color:#fff;transform:scaleX(0.8450);">Green</div>
<div class="t" style="left:1476.6px;top:1125.6px;font-size:30.0px;line-height:30.0px;color:#fff;transform:scaleX(0.8450);">Blue</div>
<div class="t" style="left:1583.9px;top:1125.6px;font-size:30.0px;line-height:30.0px;color:#fff;transform:scaleX(0.8450);">Cyan</div>
<div class="t" style="left:1678.7px;top:1125.6px;font-size:30.0px;line-height:30.0px;color:#fff;transform:scaleX(0.8450);">Magenta</div>
<div class="t" style="left:1805.8px;top:1125.6px;font-size:30.0px;line-height:30.0px;color:#fff;transform:scaleX(0.8450);">Yellow</div>
<div class="t" style="left:1927.9px;top:1125.6px;font-size:30.0px;line-height:30.0px;color:#fff;transform:scaleX(0.8450);">100W</div>
<div class="t" style="left:984.0px;top:1184.6px;font-size:30.0px;line-height:30.0px;color:#fff;font-weight:bold;transform:scaleX(0.8250);">x: CIE31</div>
<div class="t" style="left:1113.0px;top:1184.2px;font-size:30.5px;line-height:30.5px;color:#f4f4f4;transform:scaleX(0.8320);">0,3138</div>
<div class="t" style="left:1232.0px;top:1184.2px;font-size:30.5px;line-height:30.5px;color:#f4f4f4;transform:scaleX(0.8320);">0,6537</div>
<div class="t" style="left:1337.0px;top:1184.2px;font-size:30.5px;line-height:30.5px;color:#f4f4f4;transform:scaleX(0.8320);">0,2989</div>
<div class="t" style="left:1456.0px;top:1184.2px;font-size:30.5px;line-height:30.5px;color:#f4f4f4;transform:scaleX(0.8320);">0,1451</div>
<div class="t" style="left:1561.0px;top:1184.2px;font-size:30.5px;line-height:30.5px;color:#f4f4f4;transform:scaleX(0.8320);">0,2237</div>
<div class="t" style="left:1680.0px;top:1184.2px;font-size:30.5px;line-height:30.5px;color:#f4f4f4;transform:scaleX(0.8320);">0,3245</div>
<div class="t" style="left:1790.0px;top:1184.2px;font-size:30.5px;line-height:30.5px;color:#f4f4f4;transform:scaleX(0.8320);">0,4210</div>
<div class="t" style="left:1909.0px;top:1184.2px;font-size:30.5px;line-height:30.5px;color:#f4f4f4;transform:scaleX(0.8320);">0,3142</div>
<div class="t" style="left:984.0px;top:1240.1px;font-size:30.0px;line-height:30.0px;color:#fff;font-weight:bold;transform:scaleX(0.8250);">y: CIE31</div>
<div class="t" style="left:1113.0px;top:1239.7px;font-size:30.5px;line-height:30.5px;color:#f4f4f4;transform:scaleX(0.8320);">0,3342</div>
<div class="t" style="left:1232.0px;top:1239.7px;font-size:30.5px;line-height:30.5px;color:#f4f4f4;transform:scaleX(0.8320);">0,3303</div>
<div class="t" style="left:1337.0px;top:1239.7px;font-size:30.5px;line-height:30.5px;color:#f4f4f4;transform:scaleX(0.8320);">0,6114</div>
<div class="t" style="left:1456.0px;top:1239.7px;font-size:30.5px;line-height:30.5px;color:#f4f4f4;transform:scaleX(0.8320);">0,0538</div>
<div class="t" style="left:1561.0px;top:1239.7px;font-size:30.5px;line-height:30.5px;color:#f4f4f4;transform:scaleX(0.8320);">0,3339</div>
<div class="t" style="left:1680.0px;top:1239.7px;font-size:30.5px;line-height:30.5px;color:#f4f4f4;transform:scaleX(0.8320);">0,1539</div>
<div class="t" style="left:1790.0px;top:1239.7px;font-size:30.5px;line-height:30.5px;color:#f4f4f4;transform:scaleX(0.8320);">0,5106</div>
<div class="t" style="left:1909.0px;top:1239.7px;font-size:30.5px;line-height:30.5px;color:#f4f4f4;transform:scaleX(0.8320);">0,3363</div>
<div class="t" style="left:984.0px;top:1295.1px;font-size:30.0px;line-height:30.0px;color:#fff;font-weight:bold;transform:scaleX(0.8250);">Y</div>
<div class="t" style="left:1113.0px;top:1294.7px;font-size:30.5px;line-height:30.5px;color:#f4f4f4;transform:scaleX(0.8320);">270,2168</div>
<div class="t" style="left:1232.0px;top:1294.7px;font-size:30.5px;line-height:30.5px;color:#f4f4f4;transform:scaleX(0.8320);">55,4875</div>
<div class="t" style="left:1337.0px;top:1294.7px;font-size:30.5px;line-height:30.5px;color:#f4f4f4;transform:scaleX(0.8320);">193,9073</div>
<div class="t" style="left:1456.0px;top:1294.7px;font-size:30.5px;line-height:30.5px;color:#f4f4f4;transform:scaleX(0.8320);">16,7815</div>
<div class="t" style="left:1561.0px;top:1294.7px;font-size:30.5px;line-height:30.5px;color:#f4f4f4;transform:scaleX(0.8320);">212,9071</div>
<div class="t" style="left:1680.0px;top:1294.7px;font-size:30.5px;line-height:30.5px;color:#f4f4f4;transform:scaleX(0.8320);">74,5047</div>
<div class="t" style="left:1790.0px;top:1294.7px;font-size:30.5px;line-height:30.5px;color:#f4f4f4;transform:scaleX(0.8320);">252,2513</div>
<div class="t" style="left:1909.0px;top:1294.7px;font-size:30.5px;line-height:30.5px;color:#f4f4f4;transform:scaleX(0.8320);">508,7184</div>
<div class="t" style="left:984.0px;top:1350.6px;font-size:30.0px;line-height:30.0px;color:#fff;font-weight:bold;transform:scaleX(0.8250);">Target Y</div>
<div class="t" style="left:1113.0px;top:1350.2px;font-size:30.5px;line-height:30.5px;color:#f4f4f4;transform:scaleX(0.8320);">265,0400</div>
<div class="t" style="left:1232.0px;top:1350.2px;font-size:30.5px;line-height:30.5px;color:#f4f4f4;transform:scaleX(0.8320);">56,3623</div>
<div class="t" style="left:1337.0px;top:1350.2px;font-size:30.5px;line-height:30.5px;color:#f4f4f4;transform:scaleX(0.8320);">189,5456</div>
<div class="t" style="left:1456.0px;top:1350.2px;font-size:30.5px;line-height:30.5px;color:#f4f4f4;transform:scaleX(0.8320);">19,1321</div>
<div class="t" style="left:1561.0px;top:1350.2px;font-size:30.5px;line-height:30.5px;color:#f4f4f4;transform:scaleX(0.8320);">208,6777</div>
<div class="t" style="left:1680.0px;top:1350.2px;font-size:30.5px;line-height:30.5px;color:#f4f4f4;transform:scaleX(0.8320);">75,4944</div>
<div class="t" style="left:1790.0px;top:1350.2px;font-size:30.5px;line-height:30.5px;color:#f4f4f4;transform:scaleX(0.8320);">245,9079</div>
<div class="t" style="left:1909.0px;top:1350.2px;font-size:30.5px;line-height:30.5px;color:#f4f4f4;transform:scaleX(0.8320);">508,7184</div>
<div class="t" style="left:984.0px;top:1405.6px;font-size:30.0px;line-height:30.0px;color:#fff;font-weight:bold;transform:scaleX(0.8250);">ΔE 2000</div>
<div class="t" style="left:1113.0px;top:1405.2px;font-size:30.5px;line-height:30.5px;color:#f4f4f4;transform:scaleX(0.8320);">2,8743</div>
<div class="t" style="left:1232.0px;top:1405.2px;font-size:30.5px;line-height:30.5px;color:#f4f4f4;transform:scaleX(0.8320);">2,2266</div>
<div class="t" style="left:1337.0px;top:1405.2px;font-size:30.5px;line-height:30.5px;color:#f4f4f4;transform:scaleX(0.8320);">1,0133</div>
<div class="t" style="left:1456.0px;top:1405.2px;font-size:30.5px;line-height:30.5px;color:#f4f4f4;transform:scaleX(0.8320);">1,3691</div>
<div class="t" style="left:1561.0px;top:1405.2px;font-size:30.5px;line-height:30.5px;color:#f4f4f4;transform:scaleX(0.8320);">1,4426</div>
<div class="t" style="left:1680.0px;top:1405.2px;font-size:30.5px;line-height:30.5px;color:#f4f4f4;transform:scaleX(0.8320);">0,4554</div>
<div class="t" style="left:1790.0px;top:1405.2px;font-size:30.5px;line-height:30.5px;color:#f4f4f4;transform:scaleX(0.8320);">0,9847</div>
<div class="t" style="left:1909.0px;top:1405.2px;font-size:30.5px;line-height:30.5px;color:#f4f4f4;transform:scaleX(0.8320);">4,6965</div>
<svg style="left:0;top:37px" width="302" height="50" viewBox="0 0 302 50">
<g transform="translate(55.9 23.6) rotate(45)">
<rect x="-13.2" y="-13.2" width="26.4" height="26.4" rx="3.2" fill="none" stroke="#fff" stroke-width="3.1"/>
<rect x="-9" y="-9" width="8.4" height="8.4" rx="1.2" fill="#fff"/><rect x=".6" y="-9" width="8.4" height="8.4" rx="1.2" fill="#fff"/>
<rect x="-9" y=".6" width="8.4" height="8.4" rx="1.2" fill="#fff"/><rect x=".6" y=".6" width="8.4" height="8.4" rx="1.2" fill="#fff"/>
</g>
<g fill="none" stroke="#fff" stroke-width="4.1">
<path d="M97.6 17.3 A8.7 8.7 0 1 0 97.6 30.4"/>
<circle cx="113" cy="23.85" r="8.7"/><path d="M121.5 13 V34.75"/>
<path d="M131.6 3 V34.75"/>
<path d="M141.6 13 V34.75 M141.6 22.4 A7.2 7.2 0 0 1 156 22.4 V34.75 M156 22.4 A7.4 7.2 0 0 1 170.8 22.4 V34.75"/>
<circle cx="186.8" cy="23.85" r="8.7"/><path d="M195.2 13 V34.75"/>
<path d="M205.3 13 V34.75 M205.3 22.2 A6.95 7 0 0 1 219.2 22.2 V34.75"/>
</g>
<defs><radialGradient id="rb" cx=".5" cy=".3" r=".75"><stop offset="0" stop-color="#c40c12"/><stop offset="1" stop-color="#e23a3e"/></radialGradient></defs>
<circle cx="272" cy="23" r="15" fill="url(#rb)"/>
<path d="M264.2 19.5 h15.6 l-7.8 8.8z" fill="#fff"/>
</svg>
<div class="b" style="left:-6.0px;top:93.8px;width:50.0px;height:45.5px;background:linear-gradient(#8c8c8c,#5a5a5a);border:2px solid #d0d0d0;border-radius:8px;"></div>
<svg style="left:0;top:93.5px" width="44" height="46" viewBox="0 0 44 46"><defs><radialGradient id="pb" cx=".5" cy=".4" r=".6"><stop offset="0" stop-color="#4e4e4e"/><stop offset="1" stop-color="#6a6a6a"/></radialGradient></defs>
<circle cx="21" cy="23.5" r="16.5" fill="url(#pb)"/><path d="M16.5 14 L26 22.5 L16.5 31z" fill="#fff"/></svg>
<div class="b" style="left:47.3px;top:93.8px;width:152.0px;height:50.7px;background:linear-gradient(#464646,#383838);border:2px solid #6a6a6a;border-bottom:0;border-radius:8px 8px 0 0;"></div>
<div class="b" style="left:142.5px;top:96.0px;width:2.0px;height:49.0px;background:#666"></div>
<div class="t" style="left:58.3px;top:112.6px;font-size:17.9px;line-height:17.9px;color:#ececec;transform:scaleX(1.0691);">History 1</div>
<svg style="left:144px;top:96px" width="54" height="49" viewBox="0 0 54 49"><circle cx="24.5" cy="26" r="15.5" fill="#3a3a3a"/><path d="M20.5 28 h9 M25 23.5 v9" stroke="#9a9a9a" stroke-width="1.6"/></svg>
<div class="b" style="left:1624.0px;top:94.2px;width:234.5px;height:50.3px;background:linear-gradient(#4e4e4e,#5a5a5a 55%,#686868);border-radius:7px 7px 0 0;box-shadow:inset 0 1.5px 0 rgba(255,255,255,.12), inset -1.5px 0 0 rgba(0,0,0,.25);overflow:hidden;"></div>
<div class="b" style="left:1624.0px;top:96.5px;width:10.0px;height:48.0px;background:linear-gradient(90deg,#1fc81f,#18d818 50%,#0fa00f);border-radius:6px 0 0 0;"></div>
<svg style="left:1747.0px;top:101px" width="38" height="38" viewBox="0 0 38 38"><defs><linearGradient id="dd" x1="0" y1="0" x2="0" y2="1"><stop offset="0" stop-color="#3c3c3c"/><stop offset="1" stop-color="#6a6a6a"/></linearGradient></defs><circle cx="19" cy="19" r="15.5" fill="url(#dd)"/><path d="M11.5 16 h15 l-7.5 8z" fill="#fff"/></svg>
<div class="t" style="left:1638.5px;top:99.0px;font-size:18.3px;line-height:18.3px;color:#f2f2f2;transform:scaleX(0.9481);">X-Rite i1Pro 3</div>
<div class="t" style="left:1638.5px;top:122.7px;font-size:18.3px;line-height:18.3px;color:#f2f2f2;transform:scaleX(0.9923);">Direct View</div>
<div class="b" style="left:1798.5px;top:97.0px;width:2.0px;height:47.5px;background:#3c3c3c"></div>
<svg style="left:1811px;top:97px" width="46" height="46" viewBox="0 0 46 46"><circle cx="22.5" cy="22" r="20" fill="#0000f0" stroke="#fff" stroke-width="1.6"/></svg>
<div class="t" style="left:1820.7px;top:112.5px;font-size:16.0px;line-height:16.0px;color:#fff;transform:scaleX(0.9600);">716</div>
<div class="b" style="left:1868.0px;top:94.2px;width:341.0px;height:50.3px;background:linear-gradient(#4e4e4e,#5a5a5a 55%,#686868);border-radius:7px 7px 0 0;box-shadow:inset 0 1.5px 0 rgba(255,255,255,.12), inset -1.5px 0 0 rgba(0,0,0,.25);overflow:hidden;"></div>
<div class="b" style="left:1868.0px;top:96.5px;width:10.0px;height:48.0px;background:linear-gradient(90deg,#1fc81f,#18d818 50%,#0fa00f);border-radius:6px 0 0 0;"></div>
<svg style="left:2164.5px;top:101px" width="38" height="38" viewBox="0 0 38 38"><defs><linearGradient id="dd" x1="0" y1="0" x2="0" y2="1"><stop offset="0" stop-color="#3c3c3c"/><stop offset="1" stop-color="#6a6a6a"/></linearGradient></defs><circle cx="19" cy="19" r="15.5" fill="url(#dd)"/><path d="M11.5 16 h15 l-7.5 8z" fill="#fff"/></svg>
<div class="t" style="left:1882.5px;top:99.0px;font-size:18.3px;line-height:18.3px;color:#f2f2f2;transform:scaleX(0.9744);">CalMAN Client 3 Pattern Generator</div>
<div class="b" style="left:2220.0px;top:94.2px;width:234.5px;height:50.3px;background:linear-gradient(#4e4e4e,#5a5a5a 55%,#686868);border-radius:7px 7px 0 0;box-shadow:inset 0 1.5px 0 rgba(255,255,255,.12), inset -1.5px 0 0 rgba(0,0,0,.25);overflow:hidden;"></div>
<div class="b" style="left:2220.0px;top:96.5px;width:10.0px;height:48.0px;background:linear-gradient(90deg,#e8e818,#f0f010 50%,#b0b008);border-radius:6px 0 0 0;"></div>
<svg style="left:2409.5px;top:101px" width="38" height="38" viewBox="0 0 38 38"><defs><linearGradient id="dd" x1="0" y1="0" x2="0" y2="1"><stop offset="0" stop-color="#3c3c3c"/><stop offset="1" stop-color="#6a6a6a"/></linearGradient></defs><circle cx="19" cy="19" r="15.5" fill="url(#dd)"/><path d="M11.5 16 h15 l-7.5 8z" fill="#fff"/></svg>
<div class="t" style="left:2234.5px;top:99.0px;font-size:18.3px;line-height:18.3px;color:#f2f2f2;transform:scaleX(0.9776);">Direct Display Control</div>
<div class="b" style="left:2460.0px;top:94.2px;width:55.0px;height:46.0px;background:linear-gradient(#9c9c9c,#7c7c7c 50%,#585858);border:1.8px solid #e0e0e0;border-radius:9px;"></div>
<svg style="left:2460px;top:94px" width="56" height="46" viewBox="0 0 56 46"><defs><linearGradient id="gc" x1="0" y1="0" x2="0" y2="1"><stop offset="0" stop-color="#626262"/><stop offset="1" stop-color="#989898"/></linearGradient></defs><circle cx="27.6" cy="23.4" r="15.5" fill="url(#gc)"/>
<g transform="translate(27.6 23.4)"><path d="M-1.97 -7.34 L-1.50 -10.69 L1.50 -10.69 L1.97 -7.34 L3.80 -6.58 L6.50 -8.63 L8.63 -6.50 L6.58 -3.80 L7.34 -1.97 L10.69 -1.50 L10.69 1.50 L7.34 1.97 L6.58 3.80 L8.63 6.50 L6.50 8.63 L3.80 6.58 L1.97 7.34 L1.50 10.69 L-1.50 10.69 L-1.97 7.34 L-3.80 6.58 L-6.50 8.63 L-8.63 6.50 L-6.58 3.80 L-7.34 1.97 L-10.69 1.50 L-10.69 -1.50 L-7.34 -1.97 L-6.58 -3.80 L-8.63 -6.50 L-6.50 -8.63 L-3.80 -6.58Z M5 0 A5 5 0 1 0 -5 0 A5 5 0 1 0 5 0Z" fill="#dedede" fill-rule="evenodd"/></g></svg>
<div class="b" style="left:2516.3px;top:94.2px;width:60.0px;height:46.0px;background:linear-gradient(#9c9c9c,#7c7c7c 50%,#585858);border:1.8px solid #e0e0e0;border-radius:9px;"></div>
<svg style="left:2516px;top:94px" width="44" height="46" viewBox="0 0 44 46"><circle cx="21.700" cy="23.400" r="15.500" fill="url(#gc)"/><path d="M26.900 14.200 L17.900 22.600 L26.900 30.900z" fill="#fff"/>
<defs><linearGradient id="eg" x1="0" y1="0" x2="1" y2="0"><stop offset="0" stop-color="#222" stop-opacity="0"/><stop offset="1" stop-color="#222" stop-opacity=".8"/></linearGradient></defs><rect x="37" y="0" width="7" height="46" fill="url(#eg)"/></svg>
<div class="b" style="left:1.5px;top:1526.5px;width:246.0px;height:104.0px;background:linear-gradient(#909090,#7a7a7a 55%,#5e5e5e);border-radius:6px 6px 0 0;box-shadow:inset 0 2px 1px rgba(255,255,255,.22),inset 1.5px 0 0 rgba(255,255,255,.12),inset -1.5px 0 0 rgba(0,0,0,.2);"></div>
<div class="b" style="left:11.5px;top:1534.5px;width:228.0px;height:59.5px;background:#c0c0c0;border-radius:6px;box-shadow:inset 0 2px 3px rgba(0,0,0,.35),0 1px 0 rgba(255,255,255,.15);"></div>
<div class="t" style="left:102.4px;top:1604.7px;font-size:17.5px;line-height:17.5px;color:#2c2c2c;font-weight:bold;transform:scaleX(0.9300);">White</div>
<div class="b" style="left:250.9px;top:1526.5px;width:246.0px;height:104.0px;background:linear-gradient(#909090,#7a7a7a 55%,#5e5e5e);border-radius:6px 6px 0 0;box-shadow:inset 0 2px 1px rgba(255,255,255,.22),inset 1.5px 0 0 rgba(255,255,255,.12),inset -1.5px 0 0 rgba(0,0,0,.2);"></div>
<div class="b" style="left:260.9px;top:1534.5px;width:228.0px;height:59.5px;background:#c00000;border-radius:6px;box-shadow:inset 0 2px 3px rgba(0,0,0,.35),0 1px 0 rgba(255,255,255,.15);"></div>
<div class="t" style="left:358.6px;top:1604.7px;font-size:17.5px;line-height:17.5px;color:#2c2c2c;font-weight:bold;transform:scaleX(0.9300);">Red</div>
<div class="b" style="left:500.4px;top:1526.5px;width:246.0px;height:104.0px;background:linear-gradient(#909090,#7a7a7a 55%,#5e5e5e);border-radius:6px 6px 0 0;box-shadow:inset 0 2px 1px rgba(255,255,255,.22),inset 1.5px 0 0 rgba(255,255,255,.12),inset -1.5px 0 0 rgba(0,0,0,.2);"></div>
<div class="b" style="left:510.4px;top:1534.5px;width:228.0px;height:59.5px;background:#00c000;border-radius:6px;box-shadow:inset 0 2px 3px rgba(0,0,0,.35),0 1px 0 rgba(255,255,255,.15);"></div>
<div class="t" style="left:599.9px;top:1604.7px;font-size:17.5px;line-height:17.5px;color:#2c2c2c;font-weight:bold;transform:scaleX(0.9300);">Green</div>
<div class="b" style="left:749.8px;top:1526.5px;width:246.0px;height:104.0px;background:linear-gradient(#909090,#7a7a7a 55%,#5e5e5e);border-radius:6px 6px 0 0;box-shadow:inset 0 2px 1px rgba(255,255,255,.22),inset 1.5px 0 0 rgba(255,255,255,.12),inset -1.5px 0 0 rgba(0,0,0,.2);"></div>
<div class="b" style="left:759.8px;top:1534.5px;width:228.0px;height:59.5px;background:#0000c0;border-radius:6px;box-shadow:inset 0 2px 3px rgba(0,0,0,.35),0 1px 0 rgba(255,255,255,.15);"></div>
<div class="t" style="left:855.2px;top:1604.7px;font-size:17.5px;line-height:17.5px;color:#2c2c2c;font-weight:bold;transform:scaleX(0.9300);">Blue</div>
<div class="b" style="left:999.3px;top:1526.5px;width:246.0px;height:104.0px;background:linear-gradient(#909090,#7a7a7a 55%,#5e5e5e);border-radius:6px 6px 0 0;box-shadow:inset 0 2px 1px rgba(255,255,255,.22),inset 1.5px 0 0 rgba(255,255,255,.12),inset -1.5px 0 0 rgba(0,0,0,.2);"></div>
<div class="b" style="left:1009.3px;top:1534.5px;width:228.0px;height:59.5px;background:#00c2c2;border-radius:6px;box-shadow:inset 0 2px 3px rgba(0,0,0,.35),0 1px 0 rgba(255,255,255,.15);"></div>
<div class="t" style="left:1102.4px;top:1604.7px;font-size:17.5px;line-height:17.5px;color:#2c2c2c;font-weight:bold;transform:scaleX(0.9300);">Cyan</div>
<div class="b" style="left:1248.8px;top:1526.5px;width:246.0px;height:104.0px;background:linear-gradient(#909090,#7a7a7a 55%,#5e5e5e);border-radius:6px 6px 0 0;box-shadow:inset 0 2px 1px rgba(255,255,255,.22),inset 1.5px 0 0 rgba(255,255,255,.12),inset -1.5px 0 0 rgba(0,0,0,.2);"></div>
<div class="b" style="left:1258.8px;top:1534.5px;width:228.0px;height:59.5px;background:#c000c0;border-radius:6px;box-shadow:inset 0 2px 3px rgba(0,0,0,.35),0 1px 0 rgba(255,255,255,.15);"></div>
<div class="t" style="left:1338.7px;top:1604.7px;font-size:17.5px;line-height:17.5px;color:#2c2c2c;font-weight:bold;transform:scaleX(0.9300);">Magenta</div>
<div class="b" style="left:1498.2px;top:1526.5px;width:246.0px;height:104.0px;background:linear-gradient(#909090,#7a7a7a 55%,#5e5e5e);border-radius:6px 6px 0 0;box-shadow:inset 0 2px 1px rgba(255,255,255,.22),inset 1.5px 0 0 rgba(255,255,255,.12),inset -1.5px 0 0 rgba(0,0,0,.2);"></div>
<div class="b" style="left:1508.2px;top:1534.5px;width:228.0px;height:59.5px;background:#c4c400;border-radius:6px;box-shadow:inset 0 2px 3px rgba(0,0,0,.35),0 1px 0 rgba(255,255,255,.15);"></div>
<div class="t" style="left:1595.9px;top:1604.7px;font-size:17.5px;line-height:17.5px;color:#2c2c2c;font-weight:bold;transform:scaleX(0.9300);">Yellow</div>
<div class="b" style="left:1747.6px;top:1526.5px;width:246.0px;height:104.0px;background:linear-gradient(#161616,#242424 60%,#303030);border-radius:6px 6px 0 0;"></div>
<div class="b" style="left:1757.6px;top:1534.5px;width:228.0px;height:59.5px;background:#ffffff;border-radius:6px;box-shadow:inset 0 2px 3px rgba(0,0,0,.35),0 1px 0 rgba(255,255,255,.15);"></div>
<div class="t" style="left:1849.4px;top:1604.7px;font-size:17.5px;line-height:17.5px;color:#fff;font-weight:bold;transform:scaleX(0.9300);">100W</div>
<div class="b" style="left:1999.0px;top:1526.5px;width:28.0px;height:104.0px;background:linear-gradient(90deg,#2a2a2a,#444 60%,#3a3a3a)"></div>
<div class="b" style="left:2030.0px;top:1526.5px;width:79.0px;height:30.0px;background:linear-gradient(#a2a2a2,#8a8a8a 45%,#6c6c6c);border-radius:7px 0 0 0;box-shadow:inset 0 1.5px 0 rgba(255,255,255,.25);"></div>
<div class="b" style="left:2030.0px;top:1557.5px;width:79.0px;height:73.0px;background:linear-gradient(#8e8e8e,#6a6a6a);box-shadow:inset 0 1.5px 0 rgba(255,255,255,.2);"></div>
<svg style="left:2030px;top:1526px" width="80" height="102" viewBox="0 0 80 102">
<circle cx="39" cy="14" r="11.5" fill="#7c7c7c"/><path d="M31 17.5 h16 l-8 -8z" fill="#222"/>
<rect x="15" y="42" width="47" height="47" rx="6" fill="#9c9c9c" stroke="#2c2c2c" stroke-width="3.2"/>
<rect x="27.5" y="54.5" width="22" height="22" fill="#000"/></svg>
<div class="b" style="left:2110.5px;top:1526.5px;width:73.0px;height:48.5px;background:linear-gradient(#a2a2a2,#8a8a8a 45%,#6c6c6c);box-shadow:inset 0 1.5px 0 rgba(255,255,255,.25),inset -1px 0 0 rgba(0,0,0,.2);"></div>
<div class="b" style="left:2184.6px;top:1526.5px;width:73.0px;height:48.5px;background:linear-gradient(#a2a2a2,#8a8a8a 45%,#6c6c6c);box-shadow:inset 0 1.5px 0 rgba(255,255,255,.25),inset -1px 0 0 rgba(0,0,0,.2);"></div>
<div class="b" style="left:2258.6px;top:1526.5px;width:73.0px;height:48.5px;background:linear-gradient(#a2a2a2,#8a8a8a 45%,#6c6c6c);box-shadow:inset 0 1.5px 0 rgba(255,255,255,.25),inset -1px 0 0 rgba(0,0,0,.2);"></div>
<div class="b" style="left:2332.7px;top:1526.5px;width:73.0px;height:48.5px;background:linear-gradient(#a2a2a2,#8a8a8a 45%,#6c6c6c);box-shadow:inset 0 1.5px 0 rgba(255,255,255,.25),inset -1px 0 0 rgba(0,0,0,.2);"></div>
<div class="b" style="left:2406.7px;top:1526.5px;width:73.0px;height:48.5px;background:linear-gradient(#a2a2a2,#8a8a8a 45%,#6c6c6c);box-shadow:inset 0 1.5px 0 rgba(255,255,255,.25),inset -1px 0 0 rgba(0,0,0,.2);"></div>
<svg style="left:2110px;top:1526px" width="372" height="50" viewBox="0 0 372 50" fill="none">
<g fill="#787878"><circle cx="37.5" cy="25" r="16.5"/><circle cx="111.5" cy="25" r="16.5"/><circle cx="185.5" cy="25" r="16.5"/><circle cx="259.5" cy="25" r="16.5"/><circle cx="333.5" cy="25" r="16.5"/></g>
<rect x="31" y="18.5" width="13" height="13" fill="#2c2c2c"/>
<path d="M106 16.5 L121 25 L106 33.5z" fill="#2c2c2c"/>
<g stroke="#2c2c2c" stroke-width="2.4"><path d="M181 17 h-4 v16 h4 M190 17 h4 v16 h-4"/><path d="M182.5 25 h1.6 M186.9 25 h1.6" stroke-width="2.2"/></g>
<path d="M259.5 25 c-2.5 -4.5 -9 -4.5 -9 0 c0 4.5 6.5 4.5 9 0 c2.5 -4.5 9 -4.5 9 0 c0 4.500 -6.500 4.500 -9 0z" stroke="#2c2c2c" stroke-width="2.4"/>
<g stroke="#2c2c2c" stroke-width="3"><path d="M325.500 23 a8.5 8.5 0 0 1 14.500 -4"/><path d="M341.500 27 a8.5 8.5 0 0 1 -14.500 4"/></g>
<path d="M342 14 v7.500 h-7.500z M325 36 v-7.500 h7.500z" fill="#2c2c2c"/>
</svg>
<div class="b" style="left:2110.5px;top:1577.5px;width:223.5px;height:53.0px;background:linear-gradient(#a4a4a4,#8c8c8c 45%,#707070);border-radius:8px 0 0 0;box-shadow:inset 0 1.5px 0 rgba(255,255,255,.3),inset -1.5px 0 0 rgba(0,0,0,.3);"></div>
<div class="b" style="left:2335.0px;top:1577.5px;width:222.0px;height:53.0px;background:linear-gradient(#a4a4a4,#8c8c8c 45%,#707070);border-radius:0 8px 0 0;box-shadow:inset 0 1.5px 0 rgba(255,255,255,.3);"></div>
<svg style="left:2110px;top:1577px" width="450" height="51" viewBox="0 0 450 51"><g fill="#7c7c7c"><circle cx="50.500" cy="26" r="16"/><circle cx="400" cy="26" r="16"/></g>
<g fill="none" stroke="#2c2c2c" stroke-width="2.6"><path d="M49 18 l-6 8 l6 8 M57 18 l-6 8 l6 8"/><path d="M394 18 l6 8 l-6 8 M402 18 l6 8 l-6 8"/></g></svg>
<div class="t" style="left:2204.0px;top:1580.9px;font-size:41.5px;line-height:41.5px;color:#2c2c2c;transform:scaleX(0.8888);text-shadow:0 0 1px #2c2c2c;">Back</div>
<div class="t" style="left:2379.5px;top:1580.9px;font-size:41.5px;line-height:41.5px;color:#2c2c2c;transform:scaleX(0.9903);text-shadow:0 0 1px #2c2c2c;">Next</div>
<svg style="left:2485px;top:1520px" width="64" height="60" viewBox="0 0 64 60"><g transform="translate(32 29)" stroke="#e60000" stroke-width="8.5" stroke-linecap="butt" filter="drop-shadow(1px 1.5px 1px rgba(0,0,0,.5))">
<path d="M0 0 V-21"/><path d="M0 0 L20 -6.5"/><path d="M0 0 L-20 -6.5"/><path d="M0 0 L12.3 17"/><path d="M0 0 L-12.3 17"/></g></svg>
</div></body></html>
